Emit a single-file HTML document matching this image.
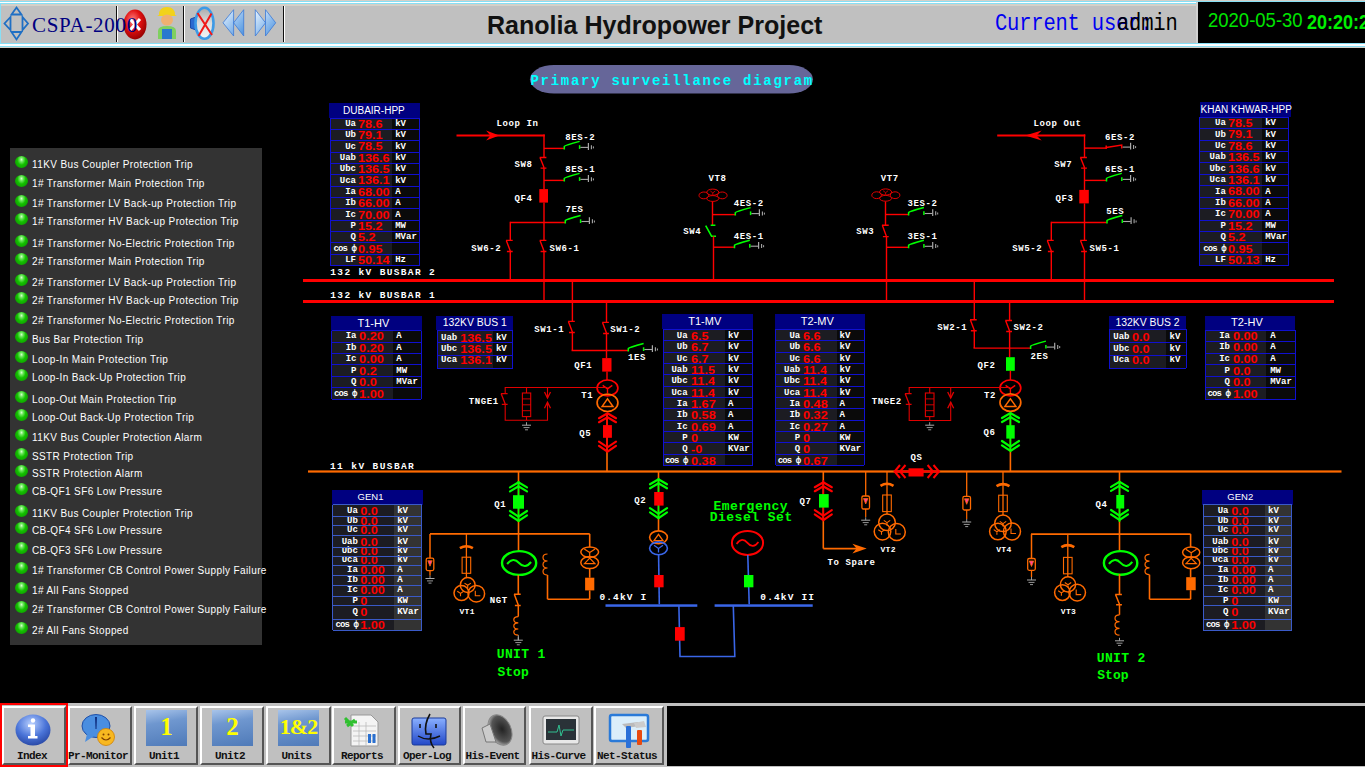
<!DOCTYPE html>
<html><head><meta charset="utf-8">
<style>
*{box-sizing:border-box}
html,body{margin:0;padding:0}
body{width:1365px;height:767px;overflow:hidden;position:relative;background:#000;font-family:"Liberation Sans",sans-serif}
.abs{position:absolute}
#top{position:absolute;left:0;top:0;width:1365px;height:48px;background:#d4d0c8}
#topin{position:absolute;left:0;top:1px;width:1365px;height:46px;background:#c0c0c0;
  border-top:1px solid #87dff5;border-bottom:1px solid #87dff5;border-left:1px solid #87dff5}
.sep{position:absolute;top:4px;width:2px;height:38px;background:#101010;border-right:1px solid #fff}
#panel{position:absolute;left:10px;top:148px;width:252px;height:497px;background:#333}
.al{position:absolute;left:22px;color:#fff;font-size:10px;letter-spacing:0.38px;white-space:nowrap;line-height:12px}
.led{position:absolute;left:5px;width:13px;height:12px;border-radius:50%;
  background:radial-gradient(ellipse at 50% 30%,#d8ffd0 0,#6fe860 18%,#14c000 45%,#0a8a00 100%)}
#tb{position:absolute;left:0;top:703px;width:1365px;height:64px;background:#c0c0c0}
#tbblack{position:absolute;left:667px;top:706px;width:698px;height:60px;background:#000}
.btn{position:absolute;top:706px;height:59px;background:#c0c0c0;border-top:2px solid #fff;border-left:2px solid #fff;border-right:2px solid #555;border-bottom:2px solid #555}
.bl{position:absolute;left:-7px;right:-3px;bottom:0px;text-align:center;font-family:"Liberation Mono",monospace;font-weight:bold;font-size:11px;letter-spacing:-0.6px;color:#111;line-height:13px}
.lbl{font-family:"Liberation Mono",monospace;font-weight:bold}
.tbl{position:absolute;border-collapse:collapse}
.th{position:absolute;background:#000080;color:#fff;font-size:11px;text-align:center;white-space:nowrap;line-height:14px}
.row{position:absolute;border:1px solid #1010d0;overflow:hidden}
.c1{position:absolute;left:0;top:0;bottom:0;background:#1c1c22}
.c2{position:absolute;top:0;bottom:0;right:0;background:#0a0a0a}
.lab{position:absolute;font-family:"Liberation Mono",monospace;font-weight:bold;font-size:9px;color:#fff;white-space:nowrap;text-align:right}
.val{position:absolute;color:#f00;font-size:12.7px;font-weight:bold;white-space:nowrap;line-height:12px;transform:scaleY(0.86);transform-origin:0 2px}
.unit{position:absolute;font-family:"Liberation Mono",monospace;font-weight:bold;font-size:9px;color:#fff;white-space:nowrap}
</style></head><body>

<div id="top"><div id="topin"></div></div>
<div class="abs" style="left:0;top:2px;width:1365px;height:1px;background:#fff"></div>
<div class="abs" style="left:0;top:43px;width:1365px;height:1px;background:#87dff5"></div>
<div class="abs" style="left:0;top:44px;width:1365px;height:2px;background:#fff"></div>
<div class="abs" style="left:0;top:3px;width:1365px;height:1px;background:#87dff5"></div>
<div class="abs" style="left:0;top:46px;width:1365px;height:1px;background:#87dff5"></div>
<div class="sep" style="left:116px"></div>
<div class="sep" style="left:183px"></div>
<div class="sep" style="left:283px"></div>
<svg class="abs" style="left:0;top:0" width="32" height="44" viewBox="0 0 32 44">
<g fill="none" stroke="#1f6fc4" stroke-width="1.8" stroke-linejoin="miter">
<path d="M11.5 14.5 L16.5 7.5 L21.5 14.5 Z"/><path d="M11.5 32 L16.5 39.5 L21.5 32 Z"/>
<path d="M10.5 17 L4.5 23.5 L10.5 30 Z"/><path d="M22.5 17 L28 23.5 L22.5 30 Z"/>
</g></svg>
<div class="abs" style="left:1px;top:4px;width:1364px;height:2px;background:#d4d0c8"></div>
<svg class="abs" style="left:122px;top:8px" width="26" height="33" viewBox="0 0 26 33">
<defs><radialGradient id="rg" cx="40%" cy="35%" r="70%"><stop offset="0" stop-color="#ff8080"/><stop offset="0.5" stop-color="#e01010"/><stop offset="1" stop-color="#900000"/></radialGradient></defs>
<ellipse cx="13" cy="16.5" rx="11.5" ry="15" fill="url(#rg)"/>
<path d="M8 11 L18 22 M18 11 L8 22" stroke="#fff" stroke-width="3"/>
</svg>
<svg class="abs" style="left:156px;top:5px" width="22" height="36" viewBox="0 0 22 36">
<path d="M3 10 Q3 2 11 2 Q19 2 19 10 L21 11 L1 11 Z" fill="#f2d21a"/>
<ellipse cx="11" cy="15" rx="6" ry="5.5" fill="#f0b070"/>
<path d="M2 34 L2 26 Q2 21 11 21 Q20 21 20 26 L20 34 Z" fill="#7fd060"/>
<path d="M6 34 L6 24 L16 24 L16 34 Z" fill="#2a78d0"/>
</svg>
<div class="abs" style="left:32px;top:12.5px;font-family:'Liberation Serif',serif;font-size:21px;letter-spacing:0.7px;color:#000080;line-height:24px">CSPA-2000</div>
<svg class="abs" style="left:180px;top:0" width="120" height="48" viewBox="180 0 120 48">
<defs><linearGradient id="spg" x1="0" y1="0" x2="0" y2="1"><stop offset="0" stop-color="#aaa"/><stop offset="0.5" stop-color="#ddd"/><stop offset="1" stop-color="#f4f4f4"/></linearGradient>
<linearGradient id="bg1" x1="0" y1="0" x2="1" y2="1"><stop offset="0" stop-color="#e8f4ff"/><stop offset="1" stop-color="#4a92e0"/></linearGradient></defs>
<path d="M190.5 19 L196 17 L196 30 L190.5 28 Z" fill="#2a6ad0" stroke="#1a4aa8" stroke-width="1"/>
<ellipse cx="204.5" cy="23.3" rx="9" ry="15.5" fill="url(#spg)" stroke="#3d9ae6" stroke-width="2.6"/>
<path d="M197.5 13 L212 35 M211.5 13.5 L198.5 36" stroke="#f01818" stroke-width="2"/>
<path d="M233.6 9.7 L223 22.8 L233.6 36 Z M243.7 9.7 L233.6 22.8 L243.7 36 Z" fill="url(#bg1)" stroke="#3a7ad8" stroke-width="0.8"/>
<path d="M255.3 9.7 L265.5 22.8 L255.3 36 Z M265.5 9.7 L275.7 22.8 L265.5 36 Z" fill="url(#bg1)" stroke="#3a7ad8" stroke-width="0.8"/>
</svg>
<div class="abs" style="left:487px;top:10.3px;font-size:25.05px;font-weight:bold;color:#111;line-height:30px;white-space:nowrap">Ranolia Hydropower Project</div>
<div class="abs" style="left:995px;top:11.5px;font-family:'Liberation Mono',monospace;font-size:20.5px;letter-spacing:-0.2px;color:#0000f0;line-height:26px;white-space:nowrap;transform:scaleY(1.2);transform-origin:0 19px">Current user:</div>
<div class="abs" style="left:1117px;top:11.5px;font-family:'Liberation Mono',monospace;font-size:20.5px;letter-spacing:-0.2px;color:#000;line-height:26px;white-space:nowrap;transform:scaleY(1.2);transform-origin:0 19px">admin</div>
<div class="abs" style="left:1196px;top:2px;width:169px;height:41px;background:#000;border-left:2px solid #d0d0d0"></div>
<div class="abs" style="left:1208px;top:8px;font-size:18.5px;color:#00e400;line-height:22px;white-space:nowrap;transform:scaleY(1.14);transform-origin:0 4px">2020-05-30</div>
<div class="abs" style="left:1307px;top:10.5px;font-size:18px;font-weight:bold;color:#00f000;line-height:22px;white-space:nowrap;transform:scaleY(1.08);transform-origin:0 4px">20:20:27</div>
<div id="panel">
<div class="led" style="top:8px"></div><div class="al" style="top:10.5px">11KV Bus Coupler Protection Trip</div>
<div class="led" style="top:27px"></div><div class="al" style="top:29.5px">1# Transformer Main Protection Trip</div>
<div class="led" style="top:47px"></div><div class="al" style="top:49.5px">1# Transformer LV Back-up Protection Trip</div>
<div class="led" style="top:65px"></div><div class="al" style="top:67.5px">1# Transformer HV Back-up Protection Trip</div>
<div class="led" style="top:87px"></div><div class="al" style="top:89.5px">1# Transformer No-Electric Protection Trip</div>
<div class="led" style="top:105px"></div><div class="al" style="top:107.5px">2# Transformer Main Protection Trip</div>
<div class="led" style="top:126px"></div><div class="al" style="top:128.5px">2# Transformer LV Back-up Protection Trip</div>
<div class="led" style="top:144px"></div><div class="al" style="top:146.5px">2# Transformer HV Back-up Protection Trip</div>
<div class="led" style="top:164px"></div><div class="al" style="top:166.5px">2# Transformer No-Electric Protection Trip</div>
<div class="led" style="top:183px"></div><div class="al" style="top:185.5px">Bus Bar Protection Trip</div>
<div class="led" style="top:203px"></div><div class="al" style="top:205.5px">Loop-In Main Protection Trip</div>
<div class="led" style="top:221px"></div><div class="al" style="top:223.5px">Loop-In Back-Up Protection Trip</div>
<div class="led" style="top:243px"></div><div class="al" style="top:245.5px">Loop-Out Main Protection Trip</div>
<div class="led" style="top:261px"></div><div class="al" style="top:263.5px">Loop-Out Back-Up Protection Trip</div>
<div class="led" style="top:281px"></div><div class="al" style="top:283.5px">11KV Bus Coupler Protection Alarm</div>
<div class="led" style="top:300px"></div><div class="al" style="top:302.5px">SSTR Protection Trip</div>
<div class="led" style="top:317px"></div><div class="al" style="top:319.5px">SSTR Protection Alarm</div>
<div class="led" style="top:335px"></div><div class="al" style="top:337.5px">CB-QF1 SF6 Low Pressure</div>
<div class="led" style="top:357px"></div><div class="al" style="top:359.5px">11KV Bus Coupler Protection Trip</div>
<div class="led" style="top:374px"></div><div class="al" style="top:376.5px">CB-QF4 SF6 Low Pressure</div>
<div class="led" style="top:394px"></div><div class="al" style="top:396.5px">CB-QF3 SF6 Low Pressure</div>
<div class="led" style="top:414px"></div><div class="al" style="top:416.5px">1# Transformer CB Control Power Supply Failure</div>
<div class="led" style="top:434px"></div><div class="al" style="top:436.5px">1# All Fans Stopped</div>
<div class="led" style="top:453px"></div><div class="al" style="top:455.5px">2# Transformer CB Control Power Supply Failure</div>
<div class="led" style="top:474px"></div><div class="al" style="top:476.5px">2# All Fans Stopped</div>
</div><div class="th" style="left:329px;top:103px;width:91px;height:15px;font-size:10px;line-height:15px"><span style="position:relative;left:-0.6px">DUBAIR-HPP</span></div>
<div class="abs" style="left:330.5px;top:118.0px;width:61.5px;height:147.5px;background:#1c1c22"></div>
<div class="abs" style="left:392px;top:118.0px;width:27.5px;height:147.5px;background:#0a0a0a"></div>
<div class="lab" style="left:296px;top:118.80000000000001px;line-height:11px;width:60px">Ua</div>
<div class="val" style="left:357.9px;top:118.7px">78.6</div>
<div class="unit" style="left:395.2px;top:118.80000000000001px;line-height:11px">kV</div>
<div class="lab" style="left:296px;top:130.10000000000002px;line-height:11px;width:60px">Ub</div>
<div class="val" style="left:357.9px;top:130.00000000000003px">79.1</div>
<div class="unit" style="left:395.2px;top:130.10000000000002px;line-height:11px">kV</div>
<div class="lab" style="left:296px;top:141.5px;line-height:11px;width:60px">Uc</div>
<div class="val" style="left:357.9px;top:141.4px">78.5</div>
<div class="unit" style="left:395.2px;top:141.5px;line-height:11px">kV</div>
<div class="lab" style="left:296px;top:152.8px;line-height:11px;width:60px">Uab</div>
<div class="val" style="left:357.9px;top:152.70000000000002px">136.6</div>
<div class="unit" style="left:395.2px;top:152.8px;line-height:11px">kV</div>
<div class="lab" style="left:296px;top:164.20000000000002px;line-height:11px;width:60px">Ubc</div>
<div class="val" style="left:357.9px;top:164.10000000000002px">136.5</div>
<div class="unit" style="left:395.2px;top:164.20000000000002px;line-height:11px">kV</div>
<div class="lab" style="left:296px;top:175.5px;line-height:11px;width:60px">Uca</div>
<div class="val" style="left:357.9px;top:175.4px">136.1</div>
<div class="unit" style="left:395.2px;top:175.5px;line-height:11px">kV</div>
<div class="lab" style="left:296px;top:186.9px;line-height:11px;width:60px">Ia</div>
<div class="val" style="left:357.9px;top:186.8px">68.00</div>
<div class="unit" style="left:395.2px;top:186.9px;line-height:11px">A</div>
<div class="lab" style="left:296px;top:198.20000000000002px;line-height:11px;width:60px">Ib</div>
<div class="val" style="left:357.9px;top:198.10000000000002px">66.00</div>
<div class="unit" style="left:395.2px;top:198.20000000000002px;line-height:11px">A</div>
<div class="lab" style="left:296px;top:209.60000000000002px;line-height:11px;width:60px">Ic</div>
<div class="val" style="left:357.9px;top:209.50000000000003px">70.00</div>
<div class="unit" style="left:395.2px;top:209.60000000000002px;line-height:11px">A</div>
<div class="lab" style="left:296px;top:220.9px;line-height:11px;width:60px">P</div>
<div class="val" style="left:357.9px;top:220.8px">15.2</div>
<div class="unit" style="left:395.2px;top:220.9px;line-height:11px">MW</div>
<div class="lab" style="left:296px;top:232.3px;line-height:11px;width:60px">Q</div>
<div class="val" style="left:357.9px;top:232.20000000000002px">5.2</div>
<div class="unit" style="left:395.2px;top:232.3px;line-height:11px">MVar</div>
<div class="lab" style="left:296px;top:243.60000000000002px;line-height:11px;width:60px"><span style="letter-spacing:-0.9px">cos &#1092;</span></div>
<div class="val" style="left:357.9px;top:243.50000000000003px">0.95</div>
<div class="lab" style="left:296px;top:254.99999999999997px;line-height:11px;width:60px">LF</div>
<div class="val" style="left:357.9px;top:254.89999999999998px">50.14</div>
<div class="unit" style="left:395.2px;top:254.99999999999997px;line-height:11px">Hz</div>
<div class="abs" style="left:330.5px;top:117.5px;width:89.0px;height:1px;background:#1010d0"></div>
<div class="abs" style="left:330.5px;top:128.8px;width:89.0px;height:1px;background:#1010d0"></div>
<div class="abs" style="left:330.5px;top:140.2px;width:89.0px;height:1px;background:#1010d0"></div>
<div class="abs" style="left:330.5px;top:151.5px;width:89.0px;height:1px;background:#1010d0"></div>
<div class="abs" style="left:330.5px;top:162.9px;width:89.0px;height:1px;background:#1010d0"></div>
<div class="abs" style="left:330.5px;top:174.2px;width:89.0px;height:1px;background:#1010d0"></div>
<div class="abs" style="left:330.5px;top:185.6px;width:89.0px;height:1px;background:#1010d0"></div>
<div class="abs" style="left:330.5px;top:196.9px;width:89.0px;height:1px;background:#1010d0"></div>
<div class="abs" style="left:330.5px;top:208.3px;width:89.0px;height:1px;background:#1010d0"></div>
<div class="abs" style="left:330.5px;top:219.6px;width:89.0px;height:1px;background:#1010d0"></div>
<div class="abs" style="left:330.5px;top:231.0px;width:89.0px;height:1px;background:#1010d0"></div>
<div class="abs" style="left:330.5px;top:242.3px;width:89.0px;height:1px;background:#1010d0"></div>
<div class="abs" style="left:330.5px;top:253.7px;width:89.0px;height:1px;background:#1010d0"></div>
<div class="abs" style="left:330.5px;top:265.0px;width:89.0px;height:1px;background:#1010d0"></div>
<div class="abs" style="left:330.0px;top:118.0px;width:1px;height:147.5px;background:#1010d0"></div>
<div class="abs" style="left:419.0px;top:118.0px;width:1px;height:147.5px;background:#1010d0"></div>
<div class="th" style="left:1200px;top:102px;width:91px;height:15px;font-size:10px;line-height:15px"><span style="position:relative;left:0.5px">KHAN KHWAR-HPP</span></div>
<div class="abs" style="left:1199.6px;top:117.3px;width:62.0px;height:148.3px;background:#1c1c22"></div>
<div class="abs" style="left:1261.6px;top:117.3px;width:27.0px;height:148.3px;background:#0a0a0a"></div>
<div class="lab" style="left:1165.8px;top:118.10000000000001px;line-height:11px;width:60px">Ua</div>
<div class="val" style="left:1227.9px;top:118.0px">78.5</div>
<div class="unit" style="left:1265.2px;top:118.10000000000001px;line-height:11px">kV</div>
<div class="lab" style="left:1165.8px;top:129.5px;line-height:11px;width:60px">Ub</div>
<div class="val" style="left:1227.9px;top:129.4px">79.1</div>
<div class="unit" style="left:1265.2px;top:129.5px;line-height:11px">kV</div>
<div class="lab" style="left:1165.8px;top:140.9px;line-height:11px;width:60px">Uc</div>
<div class="val" style="left:1227.9px;top:140.8px">78.6</div>
<div class="unit" style="left:1265.2px;top:140.9px;line-height:11px">kV</div>
<div class="lab" style="left:1165.8px;top:152.3px;line-height:11px;width:60px">Uab</div>
<div class="val" style="left:1227.9px;top:152.20000000000002px">136.5</div>
<div class="unit" style="left:1265.2px;top:152.3px;line-height:11px">kV</div>
<div class="lab" style="left:1165.8px;top:163.70000000000002px;line-height:11px;width:60px">Ubc</div>
<div class="val" style="left:1227.9px;top:163.60000000000002px">136.6</div>
<div class="unit" style="left:1265.2px;top:163.70000000000002px;line-height:11px">kV</div>
<div class="lab" style="left:1165.8px;top:175.10000000000002px;line-height:11px;width:60px">Uca</div>
<div class="val" style="left:1227.9px;top:175.00000000000003px">136.1</div>
<div class="unit" style="left:1265.2px;top:175.10000000000002px;line-height:11px">kV</div>
<div class="lab" style="left:1165.8px;top:186.5px;line-height:11px;width:60px">Ia</div>
<div class="val" style="left:1227.9px;top:186.4px">68.00</div>
<div class="unit" style="left:1265.2px;top:186.5px;line-height:11px">A</div>
<div class="lab" style="left:1165.8px;top:198.0px;line-height:11px;width:60px">Ib</div>
<div class="val" style="left:1227.9px;top:197.9px">66.00</div>
<div class="unit" style="left:1265.2px;top:198.0px;line-height:11px">A</div>
<div class="lab" style="left:1165.8px;top:209.4px;line-height:11px;width:60px">Ic</div>
<div class="val" style="left:1227.9px;top:209.3px">70.00</div>
<div class="unit" style="left:1265.2px;top:209.4px;line-height:11px">A</div>
<div class="lab" style="left:1165.8px;top:220.8px;line-height:11px;width:60px">P</div>
<div class="val" style="left:1227.9px;top:220.70000000000002px">15.2</div>
<div class="unit" style="left:1265.2px;top:220.8px;line-height:11px">MW</div>
<div class="lab" style="left:1165.8px;top:232.20000000000002px;line-height:11px;width:60px">Q</div>
<div class="val" style="left:1227.9px;top:232.10000000000002px">5.2</div>
<div class="unit" style="left:1265.2px;top:232.20000000000002px;line-height:11px">MVar</div>
<div class="lab" style="left:1165.8px;top:243.60000000000002px;line-height:11px;width:60px"><span style="letter-spacing:-0.9px">cos &#1092;</span></div>
<div class="val" style="left:1227.9px;top:243.50000000000003px">0.95</div>
<div class="lab" style="left:1165.8px;top:254.99999999999997px;line-height:11px;width:60px">LF</div>
<div class="val" style="left:1227.9px;top:254.89999999999998px">50.13</div>
<div class="unit" style="left:1265.2px;top:254.99999999999997px;line-height:11px">Hz</div>
<div class="abs" style="left:1199.6px;top:116.8px;width:89.0px;height:1px;background:#1010d0"></div>
<div class="abs" style="left:1199.6px;top:128.2px;width:89.0px;height:1px;background:#1010d0"></div>
<div class="abs" style="left:1199.6px;top:139.6px;width:89.0px;height:1px;background:#1010d0"></div>
<div class="abs" style="left:1199.6px;top:151.0px;width:89.0px;height:1px;background:#1010d0"></div>
<div class="abs" style="left:1199.6px;top:162.4px;width:89.0px;height:1px;background:#1010d0"></div>
<div class="abs" style="left:1199.6px;top:173.8px;width:89.0px;height:1px;background:#1010d0"></div>
<div class="abs" style="left:1199.6px;top:185.2px;width:89.0px;height:1px;background:#1010d0"></div>
<div class="abs" style="left:1199.6px;top:196.7px;width:89.0px;height:1px;background:#1010d0"></div>
<div class="abs" style="left:1199.6px;top:208.1px;width:89.0px;height:1px;background:#1010d0"></div>
<div class="abs" style="left:1199.6px;top:219.5px;width:89.0px;height:1px;background:#1010d0"></div>
<div class="abs" style="left:1199.6px;top:230.9px;width:89.0px;height:1px;background:#1010d0"></div>
<div class="abs" style="left:1199.6px;top:242.3px;width:89.0px;height:1px;background:#1010d0"></div>
<div class="abs" style="left:1199.6px;top:253.7px;width:89.0px;height:1px;background:#1010d0"></div>
<div class="abs" style="left:1199.6px;top:265.1px;width:89.0px;height:1px;background:#1010d0"></div>
<div class="abs" style="left:1199.1px;top:117.3px;width:1px;height:148.3px;background:#1010d0"></div>
<div class="abs" style="left:1288.1px;top:117.3px;width:1px;height:148.3px;background:#1010d0"></div>
<div class="th" style="left:331px;top:315.5px;width:90.69999999999999px;height:15.0px;font-size:11px;line-height:15.0px"><span style="position:relative;left:-3px">T1-HV</span></div>
<div class="abs" style="left:331.6px;top:330.5px;width:61.099999999999966px;height:68.89999999999998px;background:#1c1c22"></div>
<div class="abs" style="left:392.7px;top:330.5px;width:28.30000000000001px;height:68.89999999999998px;background:#0a0a0a"></div>
<div class="lab" style="left:296.5px;top:331.29999999999995px;line-height:11px;width:60px">Ia</div>
<div class="val" style="left:359.09999999999997px;top:331.2px">0.20</div>
<div class="unit" style="left:396.3px;top:331.29999999999995px;line-height:11px">A</div>
<div class="lab" style="left:296.5px;top:342.79999999999995px;line-height:11px;width:60px">Ib</div>
<div class="val" style="left:359.09999999999997px;top:342.7px">0.20</div>
<div class="unit" style="left:396.3px;top:342.79999999999995px;line-height:11px">A</div>
<div class="lab" style="left:296.5px;top:354.29999999999995px;line-height:11px;width:60px">Ic</div>
<div class="val" style="left:359.09999999999997px;top:354.2px">0.00</div>
<div class="unit" style="left:396.3px;top:354.29999999999995px;line-height:11px">A</div>
<div class="lab" style="left:296.5px;top:365.69999999999993px;line-height:11px;width:60px">P</div>
<div class="val" style="left:359.09999999999997px;top:365.59999999999997px">0.2</div>
<div class="unit" style="left:396.3px;top:365.69999999999993px;line-height:11px">MW</div>
<div class="lab" style="left:296.5px;top:377.19999999999993px;line-height:11px;width:60px">Q</div>
<div class="val" style="left:359.09999999999997px;top:377.09999999999997px">0.0</div>
<div class="unit" style="left:396.3px;top:377.19999999999993px;line-height:11px">MVar</div>
<div class="lab" style="left:296.5px;top:388.69999999999993px;line-height:11px;width:60px"><span style="letter-spacing:-0.9px">cos &#1092;</span></div>
<div class="val" style="left:359.09999999999997px;top:388.59999999999997px">1.00</div>
<div class="abs" style="left:331.6px;top:330.0px;width:89.39999999999998px;height:1px;background:#1010d0"></div>
<div class="abs" style="left:331.6px;top:341.5px;width:89.39999999999998px;height:1px;background:#1010d0"></div>
<div class="abs" style="left:331.6px;top:353.0px;width:89.39999999999998px;height:1px;background:#1010d0"></div>
<div class="abs" style="left:331.6px;top:364.4px;width:89.39999999999998px;height:1px;background:#1010d0"></div>
<div class="abs" style="left:331.6px;top:375.9px;width:89.39999999999998px;height:1px;background:#1010d0"></div>
<div class="abs" style="left:331.6px;top:387.4px;width:89.39999999999998px;height:1px;background:#1010d0"></div>
<div class="abs" style="left:331.6px;top:398.9px;width:89.39999999999998px;height:1px;background:#1010d0"></div>
<div class="abs" style="left:331.1px;top:330.5px;width:1px;height:68.89999999999998px;background:#1010d0"></div>
<div class="abs" style="left:420.5px;top:330.5px;width:1px;height:68.89999999999998px;background:#1010d0"></div>
<div class="th" style="left:436.4px;top:315.6px;width:76.89999999999998px;height:14.399999999999977px;font-size:10.4px;line-height:14.399999999999977px"><span style="position:relative;left:0px">132KV BUS 1</span></div>
<div class="abs" style="left:437px;top:330.0px;width:55.80000000000001px;height:38.60000000000002px;background:#1c1c22"></div>
<div class="abs" style="left:492.8px;top:330.0px;width:19.69999999999999px;height:38.60000000000002px;background:#0a0a0a"></div>
<div class="lab" style="left:441.0px;top:332.59999999999997px;line-height:11px;text-align:left">Uab</div>
<div class="val" style="left:460.2px;top:332.5px">136.5</div>
<div class="unit" style="left:495.9px;top:332.59999999999997px;line-height:11px">kV</div>
<div class="lab" style="left:441.0px;top:344.0px;line-height:11px;text-align:left">Ubc</div>
<div class="val" style="left:460.2px;top:343.90000000000003px">136.5</div>
<div class="unit" style="left:495.9px;top:344.0px;line-height:11px">kV</div>
<div class="lab" style="left:441.0px;top:354.79999999999995px;line-height:11px;text-align:left">Uca</div>
<div class="val" style="left:460.2px;top:354.7px">136.1</div>
<div class="unit" style="left:495.9px;top:354.79999999999995px;line-height:11px">kV</div>
<div class="abs" style="left:437px;top:329.5px;width:75.5px;height:1px;background:#1010d0"></div>
<div class="abs" style="left:437px;top:342.4px;width:75.5px;height:1px;background:#1010d0"></div>
<div class="abs" style="left:437px;top:355.2px;width:75.5px;height:1px;background:#1010d0"></div>
<div class="abs" style="left:437px;top:368.1px;width:75.5px;height:1px;background:#1010d0"></div>
<div class="abs" style="left:436.5px;top:330.0px;width:1px;height:38.60000000000002px;background:#1010d0"></div>
<div class="abs" style="left:512.0px;top:330.0px;width:1px;height:38.60000000000002px;background:#1010d0"></div>
<div class="th" style="left:662.2px;top:314px;width:91.09999999999991px;height:15.300000000000011px;font-size:11px;line-height:15.300000000000011px"><span style="position:relative;left:-3px">T1-MV</span></div>
<div class="abs" style="left:663.4px;top:329.3px;width:61.200000000000045px;height:136.2px;background:#1c1c22"></div>
<div class="abs" style="left:724.6px;top:329.3px;width:28.0px;height:136.2px;background:#0a0a0a"></div>
<div class="lab" style="left:627.6px;top:330.9px;line-height:11px;width:60px">Ua</div>
<div class="val" style="left:691.0px;top:330.8px">6.5</div>
<div class="unit" style="left:728.1px;top:330.9px;line-height:11px">kV</div>
<div class="lab" style="left:627.6px;top:342.29999999999995px;line-height:11px;width:60px">Ub</div>
<div class="val" style="left:691.0px;top:342.2px">6.7</div>
<div class="unit" style="left:728.1px;top:342.29999999999995px;line-height:11px">kV</div>
<div class="lab" style="left:627.6px;top:353.59999999999997px;line-height:11px;width:60px">Uc</div>
<div class="val" style="left:691.0px;top:353.5px">6.7</div>
<div class="unit" style="left:728.1px;top:353.59999999999997px;line-height:11px">kV</div>
<div class="lab" style="left:627.6px;top:364.99999999999994px;line-height:11px;width:60px">Uab</div>
<div class="val" style="left:691.0px;top:364.9px">11.5</div>
<div class="unit" style="left:728.1px;top:364.99999999999994px;line-height:11px">kV</div>
<div class="lab" style="left:627.6px;top:376.29999999999995px;line-height:11px;width:60px">Ubc</div>
<div class="val" style="left:691.0px;top:376.2px">11.4</div>
<div class="unit" style="left:728.1px;top:376.29999999999995px;line-height:11px">kV</div>
<div class="lab" style="left:627.6px;top:387.7px;line-height:11px;width:60px">Uca</div>
<div class="val" style="left:691.0px;top:387.6px">11.4</div>
<div class="unit" style="left:728.1px;top:387.7px;line-height:11px">kV</div>
<div class="lab" style="left:627.6px;top:398.99999999999994px;line-height:11px;width:60px">Ia</div>
<div class="val" style="left:691.0px;top:398.9px">1.67</div>
<div class="unit" style="left:728.1px;top:398.99999999999994px;line-height:11px">A</div>
<div class="lab" style="left:627.6px;top:410.4px;line-height:11px;width:60px">Ib</div>
<div class="val" style="left:691.0px;top:410.3px">0.58</div>
<div class="unit" style="left:728.1px;top:410.4px;line-height:11px">A</div>
<div class="lab" style="left:627.6px;top:421.7px;line-height:11px;width:60px">Ic</div>
<div class="val" style="left:691.0px;top:421.6px">0.69</div>
<div class="unit" style="left:728.1px;top:421.7px;line-height:11px">A</div>
<div class="lab" style="left:627.6px;top:432.99999999999994px;line-height:11px;width:60px">P</div>
<div class="val" style="left:691.0px;top:432.9px">0</div>
<div class="unit" style="left:728.1px;top:432.99999999999994px;line-height:11px">KW</div>
<div class="lab" style="left:627.6px;top:444.4px;line-height:11px;width:60px">Q</div>
<div class="val" style="left:691.0px;top:444.3px">-0</div>
<div class="unit" style="left:728.1px;top:444.4px;line-height:11px">KVar</div>
<div class="lab" style="left:627.6px;top:455.7px;line-height:11px;width:60px"><span style="letter-spacing:-0.9px">cos &#1092;</span></div>
<div class="val" style="left:691.0px;top:455.6px">0.38</div>
<div class="abs" style="left:663.4px;top:328.8px;width:89.20000000000005px;height:1px;background:#1010d0"></div>
<div class="abs" style="left:663.4px;top:340.2px;width:89.20000000000005px;height:1px;background:#1010d0"></div>
<div class="abs" style="left:663.4px;top:351.5px;width:89.20000000000005px;height:1px;background:#1010d0"></div>
<div class="abs" style="left:663.4px;top:362.9px;width:89.20000000000005px;height:1px;background:#1010d0"></div>
<div class="abs" style="left:663.4px;top:374.2px;width:89.20000000000005px;height:1px;background:#1010d0"></div>
<div class="abs" style="left:663.4px;top:385.6px;width:89.20000000000005px;height:1px;background:#1010d0"></div>
<div class="abs" style="left:663.4px;top:396.9px;width:89.20000000000005px;height:1px;background:#1010d0"></div>
<div class="abs" style="left:663.4px;top:408.3px;width:89.20000000000005px;height:1px;background:#1010d0"></div>
<div class="abs" style="left:663.4px;top:419.6px;width:89.20000000000005px;height:1px;background:#1010d0"></div>
<div class="abs" style="left:663.4px;top:430.9px;width:89.20000000000005px;height:1px;background:#1010d0"></div>
<div class="abs" style="left:663.4px;top:442.3px;width:89.20000000000005px;height:1px;background:#1010d0"></div>
<div class="abs" style="left:663.4px;top:453.6px;width:89.20000000000005px;height:1px;background:#1010d0"></div>
<div class="abs" style="left:663.4px;top:465.0px;width:89.20000000000005px;height:1px;background:#1010d0"></div>
<div class="abs" style="left:662.9px;top:329.3px;width:1px;height:136.2px;background:#1010d0"></div>
<div class="abs" style="left:752.1px;top:329.3px;width:1px;height:136.2px;background:#1010d0"></div>
<div class="th" style="left:775.1px;top:314px;width:90.39999999999998px;height:15.300000000000011px;font-size:11px;line-height:15.300000000000011px"><span style="position:relative;left:-3px">T2-MV</span></div>
<div class="abs" style="left:775.6px;top:329.3px;width:61.0px;height:136.2px;background:#1c1c22"></div>
<div class="abs" style="left:836.6px;top:329.3px;width:27.699999999999932px;height:136.2px;background:#0a0a0a"></div>
<div class="lab" style="left:740.2px;top:330.9px;line-height:11px;width:60px">Ua</div>
<div class="val" style="left:803.0px;top:330.8px">6.6</div>
<div class="unit" style="left:839.6px;top:330.9px;line-height:11px">kV</div>
<div class="lab" style="left:740.2px;top:342.29999999999995px;line-height:11px;width:60px">Ub</div>
<div class="val" style="left:803.0px;top:342.2px">6.6</div>
<div class="unit" style="left:839.6px;top:342.29999999999995px;line-height:11px">kV</div>
<div class="lab" style="left:740.2px;top:353.59999999999997px;line-height:11px;width:60px">Uc</div>
<div class="val" style="left:803.0px;top:353.5px">6.6</div>
<div class="unit" style="left:839.6px;top:353.59999999999997px;line-height:11px">kV</div>
<div class="lab" style="left:740.2px;top:364.99999999999994px;line-height:11px;width:60px">Uab</div>
<div class="val" style="left:803.0px;top:364.9px">11.4</div>
<div class="unit" style="left:839.6px;top:364.99999999999994px;line-height:11px">kV</div>
<div class="lab" style="left:740.2px;top:376.29999999999995px;line-height:11px;width:60px">Ubc</div>
<div class="val" style="left:803.0px;top:376.2px">11.4</div>
<div class="unit" style="left:839.6px;top:376.29999999999995px;line-height:11px">kV</div>
<div class="lab" style="left:740.2px;top:387.7px;line-height:11px;width:60px">Uca</div>
<div class="val" style="left:803.0px;top:387.6px">11.4</div>
<div class="unit" style="left:839.6px;top:387.7px;line-height:11px">kV</div>
<div class="lab" style="left:740.2px;top:398.99999999999994px;line-height:11px;width:60px">Ia</div>
<div class="val" style="left:803.0px;top:398.9px">0.48</div>
<div class="unit" style="left:839.6px;top:398.99999999999994px;line-height:11px">A</div>
<div class="lab" style="left:740.2px;top:410.4px;line-height:11px;width:60px">Ib</div>
<div class="val" style="left:803.0px;top:410.3px">0.32</div>
<div class="unit" style="left:839.6px;top:410.4px;line-height:11px">A</div>
<div class="lab" style="left:740.2px;top:421.7px;line-height:11px;width:60px">Ic</div>
<div class="val" style="left:803.0px;top:421.6px">0.27</div>
<div class="unit" style="left:839.6px;top:421.7px;line-height:11px">A</div>
<div class="lab" style="left:740.2px;top:432.99999999999994px;line-height:11px;width:60px">P</div>
<div class="val" style="left:803.0px;top:432.9px">0</div>
<div class="unit" style="left:839.6px;top:432.99999999999994px;line-height:11px">KW</div>
<div class="lab" style="left:740.2px;top:444.4px;line-height:11px;width:60px">Q</div>
<div class="val" style="left:803.0px;top:444.3px">0</div>
<div class="unit" style="left:839.6px;top:444.4px;line-height:11px">KVar</div>
<div class="lab" style="left:740.2px;top:455.7px;line-height:11px;width:60px"><span style="letter-spacing:-0.9px">cos &#1092;</span></div>
<div class="val" style="left:803.0px;top:455.6px">0.67</div>
<div class="abs" style="left:775.6px;top:328.8px;width:88.69999999999993px;height:1px;background:#1010d0"></div>
<div class="abs" style="left:775.6px;top:340.2px;width:88.69999999999993px;height:1px;background:#1010d0"></div>
<div class="abs" style="left:775.6px;top:351.5px;width:88.69999999999993px;height:1px;background:#1010d0"></div>
<div class="abs" style="left:775.6px;top:362.9px;width:88.69999999999993px;height:1px;background:#1010d0"></div>
<div class="abs" style="left:775.6px;top:374.2px;width:88.69999999999993px;height:1px;background:#1010d0"></div>
<div class="abs" style="left:775.6px;top:385.6px;width:88.69999999999993px;height:1px;background:#1010d0"></div>
<div class="abs" style="left:775.6px;top:396.9px;width:88.69999999999993px;height:1px;background:#1010d0"></div>
<div class="abs" style="left:775.6px;top:408.3px;width:88.69999999999993px;height:1px;background:#1010d0"></div>
<div class="abs" style="left:775.6px;top:419.6px;width:88.69999999999993px;height:1px;background:#1010d0"></div>
<div class="abs" style="left:775.6px;top:430.9px;width:88.69999999999993px;height:1px;background:#1010d0"></div>
<div class="abs" style="left:775.6px;top:442.3px;width:88.69999999999993px;height:1px;background:#1010d0"></div>
<div class="abs" style="left:775.6px;top:453.6px;width:88.69999999999993px;height:1px;background:#1010d0"></div>
<div class="abs" style="left:775.6px;top:465.0px;width:88.69999999999993px;height:1px;background:#1010d0"></div>
<div class="abs" style="left:775.1px;top:329.3px;width:1px;height:136.2px;background:#1010d0"></div>
<div class="abs" style="left:863.8px;top:329.3px;width:1px;height:136.2px;background:#1010d0"></div>
<div class="th" style="left:1108.6px;top:316.2px;width:77.70000000000005px;height:13.0px;font-size:10.4px;line-height:13.0px"><span style="position:relative;left:0px">132KV BUS 2</span></div>
<div class="abs" style="left:1109px;top:329.2px;width:56.59999999999991px;height:39.19999999999999px;background:#1c1c22"></div>
<div class="abs" style="left:1165.6px;top:329.2px;width:20.40000000000009px;height:39.19999999999999px;background:#0a0a0a"></div>
<div class="lab" style="left:1113.3px;top:332.2px;line-height:11px;text-align:left">Uab</div>
<div class="val" style="left:1131.9px;top:332.1px">0.0</div>
<div class="unit" style="left:1169.5px;top:332.2px;line-height:11px">kV</div>
<div class="lab" style="left:1113.3px;top:343.59999999999997px;line-height:11px;text-align:left">Ubc</div>
<div class="val" style="left:1131.9px;top:343.5px">0.0</div>
<div class="unit" style="left:1169.5px;top:343.59999999999997px;line-height:11px">kV</div>
<div class="lab" style="left:1113.3px;top:354.59999999999997px;line-height:11px;text-align:left">Uca</div>
<div class="val" style="left:1131.9px;top:354.5px">0.0</div>
<div class="unit" style="left:1169.5px;top:354.59999999999997px;line-height:11px">kV</div>
<div class="abs" style="left:1109px;top:328.7px;width:77px;height:1px;background:#1010d0"></div>
<div class="abs" style="left:1109px;top:341.8px;width:77px;height:1px;background:#1010d0"></div>
<div class="abs" style="left:1109px;top:354.8px;width:77px;height:1px;background:#1010d0"></div>
<div class="abs" style="left:1109px;top:367.9px;width:77px;height:1px;background:#1010d0"></div>
<div class="abs" style="left:1108.5px;top:329.2px;width:1px;height:39.19999999999999px;background:#1010d0"></div>
<div class="abs" style="left:1185.5px;top:329.2px;width:1px;height:39.19999999999999px;background:#1010d0"></div>
<div class="th" style="left:1204.8px;top:316.2px;width:90.20000000000005px;height:13.800000000000011px;font-size:11px;line-height:13.800000000000011px"><span style="position:relative;left:-3px">T2-HV</span></div>
<div class="abs" style="left:1205px;top:330.0px;width:61.200000000000045px;height:69.5px;background:#1c1c22"></div>
<div class="abs" style="left:1266.2px;top:330.0px;width:28.799999999999955px;height:69.5px;background:#0a0a0a"></div>
<div class="lab" style="left:1170px;top:330.79999999999995px;line-height:11px;width:60px">Ia</div>
<div class="val" style="left:1232.9px;top:330.7px">0.00</div>
<div class="unit" style="left:1270.2px;top:330.79999999999995px;line-height:11px">A</div>
<div class="lab" style="left:1170px;top:342.4px;line-height:11px;width:60px">Ib</div>
<div class="val" style="left:1232.9px;top:342.3px">0.00</div>
<div class="unit" style="left:1270.2px;top:342.4px;line-height:11px">A</div>
<div class="lab" style="left:1170px;top:353.99999999999994px;line-height:11px;width:60px">Ic</div>
<div class="val" style="left:1232.9px;top:353.9px">0.00</div>
<div class="unit" style="left:1270.2px;top:353.99999999999994px;line-height:11px">A</div>
<div class="lab" style="left:1170px;top:365.59999999999997px;line-height:11px;width:60px">P</div>
<div class="val" style="left:1232.9px;top:365.5px">0.0</div>
<div class="unit" style="left:1270.2px;top:365.59999999999997px;line-height:11px">MW</div>
<div class="lab" style="left:1170px;top:377.09999999999997px;line-height:11px;width:60px">Q</div>
<div class="val" style="left:1232.9px;top:377.0px">0.0</div>
<div class="unit" style="left:1270.2px;top:377.09999999999997px;line-height:11px">MVar</div>
<div class="lab" style="left:1170px;top:388.69999999999993px;line-height:11px;width:60px"><span style="letter-spacing:-0.9px">cos &#1092;</span></div>
<div class="val" style="left:1232.9px;top:388.59999999999997px">1.00</div>
<div class="abs" style="left:1205px;top:329.5px;width:90px;height:1px;background:#1010d0"></div>
<div class="abs" style="left:1205px;top:341.1px;width:90px;height:1px;background:#1010d0"></div>
<div class="abs" style="left:1205px;top:352.7px;width:90px;height:1px;background:#1010d0"></div>
<div class="abs" style="left:1205px;top:364.3px;width:90px;height:1px;background:#1010d0"></div>
<div class="abs" style="left:1205px;top:375.8px;width:90px;height:1px;background:#1010d0"></div>
<div class="abs" style="left:1205px;top:387.4px;width:90px;height:1px;background:#1010d0"></div>
<div class="abs" style="left:1205px;top:399.0px;width:90px;height:1px;background:#1010d0"></div>
<div class="abs" style="left:1204.5px;top:330.0px;width:1px;height:69.5px;background:#1010d0"></div>
<div class="abs" style="left:1294.5px;top:330.0px;width:1px;height:69.5px;background:#1010d0"></div>
<div class="th" style="left:332.2px;top:490.3px;width:90.60000000000002px;height:14.300000000000011px;font-size:9.5px;line-height:14.300000000000011px"><span style="position:relative;left:-7px">GEN1</span></div>
<div class="abs" style="left:332.8px;top:504.6px;width:61.0px;height:125.5px;background:#1c1c22"></div>
<div class="abs" style="left:393.8px;top:504.6px;width:28.0px;height:125.5px;background:#333333"></div>
<div class="lab" style="left:297.9px;top:505.9px;line-height:11px;width:60px">Ua</div>
<div class="val" style="left:360.2px;top:505.8px">0.0</div>
<div class="unit" style="left:397.2px;top:505.9px;line-height:11px">kV</div>
<div class="lab" style="left:297.9px;top:515.6999999999999px;line-height:11px;width:60px">Ub</div>
<div class="val" style="left:360.2px;top:515.5999999999999px">0.0</div>
<div class="unit" style="left:397.2px;top:515.6999999999999px;line-height:11px">kV</div>
<div class="lab" style="left:297.9px;top:524.9px;line-height:11px;width:60px">Uc</div>
<div class="val" style="left:360.2px;top:524.8px">0.0</div>
<div class="unit" style="left:397.2px;top:524.9px;line-height:11px">kV</div>
<div class="lab" style="left:297.9px;top:537.1999999999999px;line-height:11px;width:60px">Uab</div>
<div class="val" style="left:360.2px;top:537.0999999999999px">0.0</div>
<div class="unit" style="left:397.2px;top:537.1999999999999px;line-height:11px">kV</div>
<div class="lab" style="left:297.9px;top:546.4px;line-height:11px;width:60px">Ubc</div>
<div class="val" style="left:360.2px;top:546.3px">0.0</div>
<div class="unit" style="left:397.2px;top:546.4px;line-height:11px">kV</div>
<div class="lab" style="left:297.9px;top:555.1999999999999px;line-height:11px;width:60px">Uca</div>
<div class="val" style="left:360.2px;top:555.0999999999999px">0.0</div>
<div class="unit" style="left:397.2px;top:555.1999999999999px;line-height:11px">kV</div>
<div class="lab" style="left:297.9px;top:564.6px;line-height:11px;width:60px">Ia</div>
<div class="val" style="left:360.2px;top:564.5px">0.00</div>
<div class="unit" style="left:397.2px;top:564.6px;line-height:11px">A</div>
<div class="lab" style="left:297.9px;top:575.3px;line-height:11px;width:60px">Ib</div>
<div class="val" style="left:360.2px;top:575.1999999999999px">0.00</div>
<div class="unit" style="left:397.2px;top:575.3px;line-height:11px">A</div>
<div class="lab" style="left:297.9px;top:584.6999999999999px;line-height:11px;width:60px">Ic</div>
<div class="val" style="left:360.2px;top:584.5999999999999px">0.00</div>
<div class="unit" style="left:397.2px;top:584.6999999999999px;line-height:11px">A</div>
<div class="lab" style="left:297.9px;top:595.8px;line-height:11px;width:60px">P</div>
<div class="val" style="left:360.2px;top:595.6999999999999px">0</div>
<div class="unit" style="left:397.2px;top:595.8px;line-height:11px">KW</div>
<div class="lab" style="left:297.9px;top:607.4px;line-height:11px;width:60px">Q</div>
<div class="val" style="left:360.2px;top:607.3px">0</div>
<div class="unit" style="left:397.2px;top:607.4px;line-height:11px">KVar</div>
<div class="lab" style="left:297.9px;top:619.9px;line-height:11px;width:60px"><span style="letter-spacing:-0.9px">cos &#1092;</span></div>
<div class="val" style="left:360.2px;top:619.8px">1.00</div>
<div class="abs" style="left:332.8px;top:504.1px;width:89.0px;height:1px;background:#3a5ac8"></div>
<div class="abs" style="left:332.8px;top:515.8px;width:89.0px;height:1px;background:#3a5ac8"></div>
<div class="abs" style="left:332.8px;top:525.0px;width:89.0px;height:1px;background:#3a5ac8"></div>
<div class="abs" style="left:332.8px;top:534.8px;width:89.0px;height:1px;background:#3a5ac8"></div>
<div class="abs" style="left:332.8px;top:547.1px;width:89.0px;height:1px;background:#3a5ac8"></div>
<div class="abs" style="left:332.8px;top:555.9px;width:89.0px;height:1px;background:#3a5ac8"></div>
<div class="abs" style="left:332.8px;top:564.7px;width:89.0px;height:1px;background:#3a5ac8"></div>
<div class="abs" style="left:332.8px;top:575.0px;width:89.0px;height:1px;background:#3a5ac8"></div>
<div class="abs" style="left:332.8px;top:585.2px;width:89.0px;height:1px;background:#3a5ac8"></div>
<div class="abs" style="left:332.8px;top:596.0px;width:89.0px;height:1px;background:#3a5ac8"></div>
<div class="abs" style="left:332.8px;top:605.3px;width:89.0px;height:1px;background:#3a5ac8"></div>
<div class="abs" style="left:332.8px;top:618.5px;width:89.0px;height:1px;background:#3a5ac8"></div>
<div class="abs" style="left:332.8px;top:629.6px;width:89.0px;height:1px;background:#3a5ac8"></div>
<div class="abs" style="left:332.3px;top:504.6px;width:1px;height:125.5px;background:#3a5ac8"></div>
<div class="abs" style="left:421.3px;top:504.6px;width:1px;height:125.5px;background:#3a5ac8"></div>
<div class="th" style="left:1201.8px;top:490.3px;width:91.0px;height:14.300000000000011px;font-size:9.5px;line-height:14.300000000000011px"><span style="position:relative;left:-7px">GEN2</span></div>
<div class="abs" style="left:1203.2px;top:504.6px;width:61.59999999999991px;height:125.5px;background:#1c1c22"></div>
<div class="abs" style="left:1264.8px;top:504.6px;width:27.0px;height:125.5px;background:#333333"></div>
<div class="lab" style="left:1168.5px;top:505.9px;line-height:11px;width:60px">Ua</div>
<div class="val" style="left:1231.2px;top:505.8px">0.0</div>
<div class="unit" style="left:1268.0px;top:505.9px;line-height:11px">kV</div>
<div class="lab" style="left:1168.5px;top:515.6999999999999px;line-height:11px;width:60px">Ub</div>
<div class="val" style="left:1231.2px;top:515.5999999999999px">0.0</div>
<div class="unit" style="left:1268.0px;top:515.6999999999999px;line-height:11px">kV</div>
<div class="lab" style="left:1168.5px;top:524.9px;line-height:11px;width:60px">Uc</div>
<div class="val" style="left:1231.2px;top:524.8px">0.0</div>
<div class="unit" style="left:1268.0px;top:524.9px;line-height:11px">kV</div>
<div class="lab" style="left:1168.5px;top:537.1999999999999px;line-height:11px;width:60px">Uab</div>
<div class="val" style="left:1231.2px;top:537.0999999999999px">0.0</div>
<div class="unit" style="left:1268.0px;top:537.1999999999999px;line-height:11px">kV</div>
<div class="lab" style="left:1168.5px;top:546.4px;line-height:11px;width:60px">Ubc</div>
<div class="val" style="left:1231.2px;top:546.3px">0.0</div>
<div class="unit" style="left:1268.0px;top:546.4px;line-height:11px">kV</div>
<div class="lab" style="left:1168.5px;top:555.1999999999999px;line-height:11px;width:60px">Uca</div>
<div class="val" style="left:1231.2px;top:555.0999999999999px">0.0</div>
<div class="unit" style="left:1268.0px;top:555.1999999999999px;line-height:11px">kV</div>
<div class="lab" style="left:1168.5px;top:564.6px;line-height:11px;width:60px">Ia</div>
<div class="val" style="left:1231.2px;top:564.5px">0.00</div>
<div class="unit" style="left:1268.0px;top:564.6px;line-height:11px">A</div>
<div class="lab" style="left:1168.5px;top:575.3px;line-height:11px;width:60px">Ib</div>
<div class="val" style="left:1231.2px;top:575.1999999999999px">0.00</div>
<div class="unit" style="left:1268.0px;top:575.3px;line-height:11px">A</div>
<div class="lab" style="left:1168.5px;top:584.6999999999999px;line-height:11px;width:60px">Ic</div>
<div class="val" style="left:1231.2px;top:584.5999999999999px">0.00</div>
<div class="unit" style="left:1268.0px;top:584.6999999999999px;line-height:11px">A</div>
<div class="lab" style="left:1168.5px;top:595.8px;line-height:11px;width:60px">P</div>
<div class="val" style="left:1231.2px;top:595.6999999999999px">0</div>
<div class="unit" style="left:1268.0px;top:595.8px;line-height:11px">KW</div>
<div class="lab" style="left:1168.5px;top:607.4px;line-height:11px;width:60px">Q</div>
<div class="val" style="left:1231.2px;top:607.3px">0</div>
<div class="unit" style="left:1268.0px;top:607.4px;line-height:11px">KVar</div>
<div class="lab" style="left:1168.5px;top:619.9px;line-height:11px;width:60px"><span style="letter-spacing:-0.9px">cos &#1092;</span></div>
<div class="val" style="left:1231.2px;top:619.8px">1.00</div>
<div class="abs" style="left:1203.2px;top:504.1px;width:88.59999999999991px;height:1px;background:#3a5ac8"></div>
<div class="abs" style="left:1203.2px;top:515.8px;width:88.59999999999991px;height:1px;background:#3a5ac8"></div>
<div class="abs" style="left:1203.2px;top:525.0px;width:88.59999999999991px;height:1px;background:#3a5ac8"></div>
<div class="abs" style="left:1203.2px;top:534.8px;width:88.59999999999991px;height:1px;background:#3a5ac8"></div>
<div class="abs" style="left:1203.2px;top:547.1px;width:88.59999999999991px;height:1px;background:#3a5ac8"></div>
<div class="abs" style="left:1203.2px;top:555.9px;width:88.59999999999991px;height:1px;background:#3a5ac8"></div>
<div class="abs" style="left:1203.2px;top:564.7px;width:88.59999999999991px;height:1px;background:#3a5ac8"></div>
<div class="abs" style="left:1203.2px;top:575.0px;width:88.59999999999991px;height:1px;background:#3a5ac8"></div>
<div class="abs" style="left:1203.2px;top:585.2px;width:88.59999999999991px;height:1px;background:#3a5ac8"></div>
<div class="abs" style="left:1203.2px;top:596.0px;width:88.59999999999991px;height:1px;background:#3a5ac8"></div>
<div class="abs" style="left:1203.2px;top:605.3px;width:88.59999999999991px;height:1px;background:#3a5ac8"></div>
<div class="abs" style="left:1203.2px;top:618.5px;width:88.59999999999991px;height:1px;background:#3a5ac8"></div>
<div class="abs" style="left:1203.2px;top:629.6px;width:88.59999999999991px;height:1px;background:#3a5ac8"></div>
<div class="abs" style="left:1202.7px;top:504.6px;width:1px;height:125.5px;background:#3a5ac8"></div>
<div class="abs" style="left:1291.3px;top:504.6px;width:1px;height:125.5px;background:#3a5ac8"></div><svg class="abs" style="left:0;top:0" width="1365" height="767" viewBox="0 0 1365 767">
<style>.lbl{font-family:"Liberation Mono",monospace;font-weight:bold}.gl{font-family:"Liberation Mono",monospace;font-weight:bold}</style>
<path d="M554 65 L789 65 A24 14.3 0 0 1 789 93.6 L554 93.6 A24 14.3 0 0 1 554 65 Z" fill="#666699"/>
<text x="530.5" y="85.3" class="lbl" style="font-size:14px;letter-spacing:1.72px" fill="#00ffff">Primary surveillance diagram</text>
<rect x="303" y="279" width="1031" height="3" fill="#ff0000"/>
<rect x="303" y="300" width="1031" height="3" fill="#ff0000"/>
<rect x="308" y="470.4" width="1033.5" height="2.2000000000000455" fill="#ff6a00"/>
<text x="330.3" y="275.2" class="lbl" style="font-size:9.5px;letter-spacing:1.35px" fill="#ffffff">132 kV BUSBAR 2</text>
<text x="330.3" y="298.1" class="lbl" style="font-size:9.5px;letter-spacing:1.35px" fill="#ffffff">132 kV BUSBAR 1</text>
<text x="330.0" y="469.2" class="lbl" style="font-size:9.5px;letter-spacing:1.4px" fill="#ffffff">11 kV BUSBAR</text>
<line x1="456.5" y1="135.4" x2="544.8" y2="135.4" stroke="#ff0000" stroke-width="2"/>
<path d="M499.3 135.4 L486.1 130.4 L490.3 135.4 L486.1 140.4 Z" fill="#ff0000"/>
<line x1="544" y1="134.4" x2="544" y2="157.5" stroke="#ff0000" stroke-width="1.4"/>
<path d="M539.7 157.5 L546.4 157.5 M540 157.5 L544 167.6 M540.6 168.1 L546.4 168.1" stroke="#ff0000" stroke-width="1.4" fill="none" />
<line x1="544" y1="168.1" x2="544" y2="189.2" stroke="#ff0000" stroke-width="1.4"/>
<line x1="544" y1="148.4" x2="564" y2="148.4" stroke="#ff0000" stroke-width="1.4"/>
<path d="M564.3 149.4 L564.3 146.4 Q565 145.4 579.6 141.4" stroke="#00ff00" stroke-width="1.5" fill="none" />
<path d="M579.6 145.20000000000002 L579.6 148.9" stroke="#00ff00" stroke-width="1.5" fill="none" />
<line x1="580.4" y1="147.4" x2="588" y2="147.4" stroke="#a8a8a8" stroke-width="1.1"/>
<line x1="588.4" y1="143.1" x2="588.4" y2="149.9" stroke="#a8a8a8" stroke-width="1.2"/>
<line x1="591.4" y1="145.20000000000002" x2="591.4" y2="149.20000000000002" stroke="#a8a8a8" stroke-width="1.1"/>
<line x1="593.4" y1="146.4" x2="593.4" y2="148.4" stroke="#a8a8a8" stroke-width="1"/>
<line x1="544" y1="180.4" x2="564" y2="180.4" stroke="#ff0000" stroke-width="1.4"/>
<path d="M564.3 181.4 L564.3 178.4 Q565 177.4 579.6 173.4" stroke="#00ff00" stroke-width="1.5" fill="none" />
<path d="M579.6 177.20000000000002 L579.6 180.9" stroke="#00ff00" stroke-width="1.5" fill="none" />
<line x1="580.4" y1="179.4" x2="588" y2="179.4" stroke="#a8a8a8" stroke-width="1.1"/>
<line x1="588.4" y1="175.1" x2="588.4" y2="181.9" stroke="#a8a8a8" stroke-width="1.2"/>
<line x1="591.4" y1="177.20000000000002" x2="591.4" y2="181.20000000000002" stroke="#a8a8a8" stroke-width="1.1"/>
<line x1="593.4" y1="178.4" x2="593.4" y2="180.4" stroke="#a8a8a8" stroke-width="1"/>
<rect x="539.3" y="189.1" width="8.700000000000045" height="13.5" fill="#ff0000"/>
<line x1="544" y1="202.6" x2="544" y2="240.4" stroke="#ff0000" stroke-width="1.4"/>
<path d="M539.7 240.4 L546.4 240.4 M540 240.4 L544 251.0 M540.6 251.5 L546.4 251.5" stroke="#ff0000" stroke-width="1.4" fill="none" />
<line x1="544" y1="251.5" x2="544" y2="301" stroke="#ff0000" stroke-width="1.4"/>
<line x1="510.3" y1="222.5" x2="565" y2="222.5" stroke="#ff0000" stroke-width="1.4"/>
<path d="M565.3 223.5 L565.3 220.5 Q566 219.5 580.6 215.5" stroke="#00ff00" stroke-width="1.5" fill="none" />
<path d="M580.6 219.3 L580.6 223.0" stroke="#00ff00" stroke-width="1.5" fill="none" />
<line x1="581.4" y1="221.5" x2="589" y2="221.5" stroke="#a8a8a8" stroke-width="1.1"/>
<line x1="589.4" y1="217.2" x2="589.4" y2="224.0" stroke="#a8a8a8" stroke-width="1.2"/>
<line x1="592.4" y1="219.3" x2="592.4" y2="223.3" stroke="#a8a8a8" stroke-width="1.1"/>
<line x1="594.4" y1="220.5" x2="594.4" y2="222.5" stroke="#a8a8a8" stroke-width="1"/>
<line x1="510.3" y1="221.7" x2="510.3" y2="240.4" stroke="#ff0000" stroke-width="1.4"/>
<path d="M506.0 240.4 L512.7 240.4 M506.3 240.4 L510.3 251.0 M506.90000000000003 251.5 L512.7 251.5" stroke="#ff0000" stroke-width="1.4" fill="none" />
<line x1="510.3" y1="251.5" x2="510.3" y2="280" stroke="#ff0000" stroke-width="1.4"/>
<text x="496.5" y="126.4" class="lbl" style="font-size:9px;letter-spacing:0.6px" fill="#ffffff">Loop In</text>
<text x="565.2" y="140" class="lbl" style="font-size:9px;letter-spacing:0.6px" fill="#ffffff">8ES-2</text>
<text x="514.4" y="167.2" class="lbl" style="font-size:9px;letter-spacing:0.6px" fill="#ffffff">SW8</text>
<text x="565.2" y="171.9" class="lbl" style="font-size:9px;letter-spacing:0.6px" fill="#ffffff">8ES-1</text>
<text x="514.5" y="200.5" class="lbl" style="font-size:9px;letter-spacing:0.6px" fill="#ffffff">QF4</text>
<text x="565.5" y="212" class="lbl" style="font-size:9px;letter-spacing:0.6px" fill="#ffffff">7ES</text>
<text x="471.2" y="251" class="lbl" style="font-size:9px;letter-spacing:0.6px" fill="#ffffff">SW6-2</text>
<text x="549.5" y="251" class="lbl" style="font-size:9px;letter-spacing:0.6px" fill="#ffffff">SW6-1</text>
<ellipse cx="703.8" cy="195.4" rx="4.8" ry="3.4" fill="none" stroke="#e00000" stroke-width="1"/>
<ellipse cx="722.3" cy="195.4" rx="4.8" ry="3.4" fill="none" stroke="#e00000" stroke-width="1"/>
<ellipse cx="712.8" cy="192.20000000000002" rx="6" ry="3.1" fill="none" stroke="#e00000" stroke-width="1"/>
<ellipse cx="712.8" cy="198.5" rx="6" ry="2.9" fill="none" stroke="#e00000" stroke-width="1"/>
<path d="M710.3 190.9 L712.8 192.9 L715.3 190.9 M712.8 192.9 L712.8 194.9" stroke="#e00000" stroke-width="0.8" fill="none" />
<line x1="712.5" y1="201.5" x2="712.5" y2="225.2" stroke="#ff0000" stroke-width="1.4"/>
<path d="M710.7 225.2 L715.4 225.2 M705.7 225.7 L711.5 236.2 M711 236.2 L716 236.2" stroke="#00ff00" stroke-width="1.6" fill="none" />
<line x1="713.5" y1="236.2" x2="713.5" y2="280" stroke="#ff0000" stroke-width="1.4"/>
<line x1="712.5" y1="214.6" x2="735" y2="214.6" stroke="#ff0000" stroke-width="1.4"/>
<path d="M735.3 215.6 L735.3 212.6 Q736 211.6 750.6 207.6" stroke="#00ff00" stroke-width="1.5" fill="none" />
<path d="M750.6 211.4 L750.6 215.1" stroke="#00ff00" stroke-width="1.5" fill="none" />
<line x1="751.4" y1="213.6" x2="759" y2="213.6" stroke="#a8a8a8" stroke-width="1.1"/>
<line x1="759.4" y1="209.29999999999998" x2="759.4" y2="216.1" stroke="#a8a8a8" stroke-width="1.2"/>
<line x1="762.4" y1="211.4" x2="762.4" y2="215.4" stroke="#a8a8a8" stroke-width="1.1"/>
<line x1="764.4" y1="212.6" x2="764.4" y2="214.6" stroke="#a8a8a8" stroke-width="1"/>
<line x1="713.5" y1="247.2" x2="734.2" y2="247.2" stroke="#ff0000" stroke-width="1.4"/>
<path d="M734.5 248.2 L734.5 245.2 Q735.2 244.2 749.8000000000001 240.2" stroke="#00ff00" stroke-width="1.5" fill="none" />
<path d="M749.8000000000001 244.0 L749.8000000000001 247.7" stroke="#00ff00" stroke-width="1.5" fill="none" />
<line x1="750.6" y1="246.2" x2="758.2" y2="246.2" stroke="#a8a8a8" stroke-width="1.1"/>
<line x1="758.6" y1="241.89999999999998" x2="758.6" y2="248.7" stroke="#a8a8a8" stroke-width="1.2"/>
<line x1="761.6" y1="244.0" x2="761.6" y2="248.0" stroke="#a8a8a8" stroke-width="1.1"/>
<line x1="763.6" y1="245.2" x2="763.6" y2="247.2" stroke="#a8a8a8" stroke-width="1"/>
<text x="708.5" y="181.1" class="lbl" style="font-size:9px;letter-spacing:0.6px" fill="#ffffff">VT8</text>
<text x="733.7" y="206" class="lbl" style="font-size:9px;letter-spacing:0.6px" fill="#ffffff">4ES-2</text>
<text x="683.3" y="233.9" class="lbl" style="font-size:9px;letter-spacing:0.6px" fill="#ffffff">SW4</text>
<text x="733.7" y="238.9" class="lbl" style="font-size:9px;letter-spacing:0.6px" fill="#ffffff">4ES-1</text>
<ellipse cx="876.6" cy="195.2" rx="4.8" ry="3.4" fill="none" stroke="#e00000" stroke-width="1"/>
<ellipse cx="895.1" cy="195.2" rx="4.8" ry="3.4" fill="none" stroke="#e00000" stroke-width="1"/>
<ellipse cx="885.6" cy="192.0" rx="6" ry="3.1" fill="none" stroke="#e00000" stroke-width="1"/>
<ellipse cx="885.6" cy="198.29999999999998" rx="6" ry="2.9" fill="none" stroke="#e00000" stroke-width="1"/>
<path d="M883.1 190.7 L885.6 192.7 L888.1 190.7 M885.6 192.7 L885.6 194.7" stroke="#e00000" stroke-width="0.8" fill="none" />
<line x1="885.5" y1="201.5" x2="885.5" y2="225.3" stroke="#ff0000" stroke-width="1.4"/>
<path d="M882.0 225.3 L888.6999999999999 225.3 M882.3 225.3 L886.3 236.1 M882.9 236.6 L888.6999999999999 236.6" stroke="#ff0000" stroke-width="1.4" fill="none" />
<line x1="886.5" y1="236.6" x2="886.5" y2="301" stroke="#ff0000" stroke-width="1.4"/>
<line x1="885.4" y1="214.5" x2="908.3" y2="214.5" stroke="#ff0000" stroke-width="1.4"/>
<path d="M908.5999999999999 215.5 L908.5999999999999 212.5 Q909.3 211.5 923.9 207.5" stroke="#00ff00" stroke-width="1.5" fill="none" />
<path d="M923.9 211.3 L923.9 215.0" stroke="#00ff00" stroke-width="1.5" fill="none" />
<line x1="924.6999999999999" y1="213.5" x2="932.3" y2="213.5" stroke="#a8a8a8" stroke-width="1.1"/>
<line x1="932.6999999999999" y1="209.2" x2="932.6999999999999" y2="216.0" stroke="#a8a8a8" stroke-width="1.2"/>
<line x1="935.6999999999999" y1="211.3" x2="935.6999999999999" y2="215.3" stroke="#a8a8a8" stroke-width="1.1"/>
<line x1="937.6999999999999" y1="212.5" x2="937.6999999999999" y2="214.5" stroke="#a8a8a8" stroke-width="1"/>
<line x1="886.5" y1="247.3" x2="908.3" y2="247.3" stroke="#ff0000" stroke-width="1.4"/>
<path d="M908.5999999999999 248.3 L908.5999999999999 245.3 Q909.3 244.3 923.9 240.3" stroke="#00ff00" stroke-width="1.5" fill="none" />
<path d="M923.9 244.10000000000002 L923.9 247.8" stroke="#00ff00" stroke-width="1.5" fill="none" />
<line x1="924.6999999999999" y1="246.3" x2="932.3" y2="246.3" stroke="#a8a8a8" stroke-width="1.1"/>
<line x1="932.6999999999999" y1="242.0" x2="932.6999999999999" y2="248.8" stroke="#a8a8a8" stroke-width="1.2"/>
<line x1="935.6999999999999" y1="244.10000000000002" x2="935.6999999999999" y2="248.10000000000002" stroke="#a8a8a8" stroke-width="1.1"/>
<line x1="937.6999999999999" y1="245.3" x2="937.6999999999999" y2="247.3" stroke="#a8a8a8" stroke-width="1"/>
<text x="880.8" y="181" class="lbl" style="font-size:9px;letter-spacing:0.6px" fill="#ffffff">VT7</text>
<text x="907.5" y="206" class="lbl" style="font-size:9px;letter-spacing:0.6px" fill="#ffffff">3ES-2</text>
<text x="856.2" y="234" class="lbl" style="font-size:9px;letter-spacing:0.6px" fill="#ffffff">SW3</text>
<text x="907.5" y="239" class="lbl" style="font-size:9px;letter-spacing:0.6px" fill="#ffffff">3ES-1</text>
<line x1="997.2" y1="135.4" x2="1085.3" y2="135.4" stroke="#ff0000" stroke-width="2"/>
<path d="M1025.3 135.4 L1041.7 130.4 L1036.5 135.4 L1041.7 140.4 Z" fill="#ff0000"/>
<line x1="1084.5" y1="134.4" x2="1084.5" y2="157.5" stroke="#ff0000" stroke-width="1.4"/>
<path d="M1080.2 157.5 L1086.9 157.5 M1080.5 157.5 L1084.5 167.6 M1081.1 168.1 L1086.9 168.1" stroke="#ff0000" stroke-width="1.4" fill="none" />
<line x1="1084.5" y1="168.1" x2="1084.5" y2="190" stroke="#ff0000" stroke-width="1.4"/>
<line x1="1084.5" y1="148.1" x2="1106.2" y2="148.1" stroke="#ff0000" stroke-width="1.4"/>
<path d="M1106.2 145.6 L1106.2 149.1 M1106.2 147.6 L1121.7 145.1 L1121.7 148.6" stroke="#ff0000" stroke-width="1.5" fill="none" />
<line x1="1122.6000000000001" y1="147.1" x2="1130.2" y2="147.1" stroke="#a8a8a8" stroke-width="1.1"/>
<line x1="1130.6000000000001" y1="142.79999999999998" x2="1130.6000000000001" y2="149.6" stroke="#a8a8a8" stroke-width="1.2"/>
<line x1="1133.6000000000001" y1="144.9" x2="1133.6000000000001" y2="148.9" stroke="#a8a8a8" stroke-width="1.1"/>
<line x1="1135.6000000000001" y1="146.1" x2="1135.6000000000001" y2="148.1" stroke="#a8a8a8" stroke-width="1"/>
<line x1="1084.5" y1="180.4" x2="1106.2" y2="180.4" stroke="#ff0000" stroke-width="1.4"/>
<path d="M1106.5 181.4 L1106.5 178.4 Q1107.2 177.4 1121.8 173.4" stroke="#00ff00" stroke-width="1.5" fill="none" />
<path d="M1121.8 177.20000000000002 L1121.8 180.9" stroke="#00ff00" stroke-width="1.5" fill="none" />
<line x1="1122.6000000000001" y1="179.4" x2="1130.2" y2="179.4" stroke="#a8a8a8" stroke-width="1.1"/>
<line x1="1130.6000000000001" y1="175.1" x2="1130.6000000000001" y2="181.9" stroke="#a8a8a8" stroke-width="1.2"/>
<line x1="1133.6000000000001" y1="177.20000000000002" x2="1133.6000000000001" y2="181.20000000000002" stroke="#a8a8a8" stroke-width="1.1"/>
<line x1="1135.6000000000001" y1="178.4" x2="1135.6000000000001" y2="180.4" stroke="#a8a8a8" stroke-width="1"/>
<rect x="1079.3" y="189.9" width="9.5" height="13.5" fill="#ff0000"/>
<line x1="1084.5" y1="203.4" x2="1084.5" y2="240.4" stroke="#ff0000" stroke-width="1.4"/>
<path d="M1080.2 240.4 L1086.9 240.4 M1080.5 240.4 L1084.5 251.0 M1081.1 251.5 L1086.9 251.5" stroke="#ff0000" stroke-width="1.4" fill="none" />
<line x1="1084.5" y1="251.5" x2="1084.5" y2="301" stroke="#ff0000" stroke-width="1.4"/>
<line x1="1051.3" y1="222.5" x2="1106.7" y2="222.5" stroke="#ff0000" stroke-width="1.4"/>
<path d="M1107.0 223.5 L1107.0 220.5 Q1107.7 219.5 1122.3 215.5" stroke="#00ff00" stroke-width="1.5" fill="none" />
<path d="M1122.3 219.3 L1122.3 223.0" stroke="#00ff00" stroke-width="1.5" fill="none" />
<line x1="1123.1000000000001" y1="221.5" x2="1130.7" y2="221.5" stroke="#a8a8a8" stroke-width="1.1"/>
<line x1="1131.1000000000001" y1="217.2" x2="1131.1000000000001" y2="224.0" stroke="#a8a8a8" stroke-width="1.2"/>
<line x1="1134.1000000000001" y1="219.3" x2="1134.1000000000001" y2="223.3" stroke="#a8a8a8" stroke-width="1.1"/>
<line x1="1136.1000000000001" y1="220.5" x2="1136.1000000000001" y2="222.5" stroke="#a8a8a8" stroke-width="1"/>
<line x1="1051.3" y1="221.7" x2="1051.3" y2="240.4" stroke="#ff0000" stroke-width="1.4"/>
<path d="M1047.0 240.4 L1053.7 240.4 M1047.3 240.4 L1051.3 251.0 M1047.8999999999999 251.5 L1053.7 251.5" stroke="#ff0000" stroke-width="1.4" fill="none" />
<line x1="1051.3" y1="251.5" x2="1051.3" y2="280" stroke="#ff0000" stroke-width="1.4"/>
<text x="1033.5" y="126.2" class="lbl" style="font-size:9px;letter-spacing:0.6px" fill="#ffffff">Loop Out</text>
<text x="1105.1" y="140" class="lbl" style="font-size:9px;letter-spacing:0.6px" fill="#ffffff">6ES-2</text>
<text x="1054.3" y="167.2" class="lbl" style="font-size:9px;letter-spacing:0.6px" fill="#ffffff">SW7</text>
<text x="1105.1" y="172" class="lbl" style="font-size:9px;letter-spacing:0.6px" fill="#ffffff">6ES-1</text>
<text x="1055.4" y="200.5" class="lbl" style="font-size:9px;letter-spacing:0.6px" fill="#ffffff">QF3</text>
<text x="1106.2" y="214" class="lbl" style="font-size:9px;letter-spacing:0.6px" fill="#ffffff">5ES</text>
<text x="1012.2" y="251" class="lbl" style="font-size:9px;letter-spacing:0.6px" fill="#ffffff">SW5-2</text>
<text x="1089.5" y="251" class="lbl" style="font-size:9px;letter-spacing:0.6px" fill="#ffffff">SW5-1</text>
<line x1="572.4" y1="282" x2="572.4" y2="321.4" stroke="#ff0000" stroke-width="1.4"/>
<path d="M568.1 321.4 L574.8 321.4 M568.4 321.4 L572.4 332.0 M569.0 332.5 L574.8 332.5" stroke="#ff0000" stroke-width="1.4" fill="none" />
<line x1="572.4" y1="332.5" x2="572.4" y2="350.5" stroke="#ff0000" stroke-width="1.4"/>
<line x1="606.5" y1="303" x2="606.5" y2="322.4" stroke="#ff0000" stroke-width="1.4"/>
<path d="M602.2 322.4 L608.9 322.4 M602.5 322.4 L606.5 333.0 M603.1 333.5 L608.9 333.5" stroke="#ff0000" stroke-width="1.4" fill="none" />
<line x1="606.5" y1="333.5" x2="606.5" y2="358.1" stroke="#ff0000" stroke-width="1.4"/>
<line x1="571.6" y1="350.5" x2="628" y2="350.5" stroke="#ff0000" stroke-width="1.4"/>
<path d="M628.3 351.5 L628.3 348.5 Q629 347.5 643.6 343.5" stroke="#00ff00" stroke-width="1.5" fill="none" />
<path d="M643.6 347.3 L643.6 351.0" stroke="#00ff00" stroke-width="1.5" fill="none" />
<line x1="644.4" y1="349.5" x2="652" y2="349.5" stroke="#a8a8a8" stroke-width="1.1"/>
<line x1="652.4" y1="345.2" x2="652.4" y2="352.0" stroke="#a8a8a8" stroke-width="1.2"/>
<line x1="655.4" y1="347.3" x2="655.4" y2="351.3" stroke="#a8a8a8" stroke-width="1.1"/>
<line x1="657.4" y1="348.5" x2="657.4" y2="350.5" stroke="#a8a8a8" stroke-width="1"/>
<rect x="602.2" y="358.1" width="9.299999999999955" height="13.5" fill="#ff0000"/>
<line x1="607" y1="371.6" x2="607" y2="380" stroke="#ff0000" stroke-width="1.4"/>
<ellipse cx="607.5" cy="387.9" rx="10.4" ry="7.9" fill="none" stroke="#ff0000" stroke-width="1.7"/>
<path d="M602.7 385.42 L607.5 388.78000000000003 L612.3 385.42 M607.5 388.78000000000003 L607.5 393.1" stroke="#ff0000" stroke-width="1.4" fill="none" />
<ellipse cx="607.5" cy="402.8" rx="10.4" ry="8.7" fill="none" stroke="#ff6a00" stroke-width="1.7"/>
<path d="M602.0 406.6 L607.5 398.90000000000003 L613.0 406.6 Z" stroke="#ff6a00" stroke-width="1.5" fill="none" />
<line x1="607" y1="413" x2="607" y2="471" stroke="#ff6a00" stroke-width="1.6"/>
<path d="M599.0 418.2 L607.5 413.2 L616.0 418.2" stroke="#ff0000" stroke-width="2.2" fill="none" stroke-linecap="round"/>
<path d="M599.0 422.2 L607.5 417.2 L616.0 422.2" stroke="#ff0000" stroke-width="2.2" fill="none" stroke-linecap="round"/>
<rect x="603" y="425.1" width="8.899999999999977" height="12.699999999999989" fill="#ff0000"/>
<path d="M599.0 441.6 L607.5 447.3 L616.0 441.6" stroke="#ff0000" stroke-width="2.2" fill="none" stroke-linecap="round"/>
<path d="M599.0 445.90000000000003 L607.5 451.6 L616.0 445.90000000000003" stroke="#ff0000" stroke-width="2.2" fill="none" stroke-linecap="round"/>
<line x1="607" y1="413" x2="607" y2="451" stroke="#ff0000" stroke-width="1.6"/>
<path d="M607.5 387.5 L505.2 387.5 L505.2 393.7 M505.2 404.4 L505.2 420.2 L547.5 420.2 L547.5 402.3 M547.5 398 L547.5 387.5" stroke="#e00000" stroke-width="1.1" fill="none" />
<path d="M500.9 393.7 L507.59999999999997 393.7 M501.2 393.7 L505.2 403.9 M501.8 404.4 L507.59999999999997 404.4" stroke="#e00000" stroke-width="1.3" fill="none" />
<rect x="522.4" y="393" width="8.3" height="23.6" fill="none" stroke="#e00000" stroke-width="1.1"/>
<line x1="522.4" y1="398.9" x2="530.7" y2="398.9" stroke="#e00000" stroke-width="0.9"/>
<line x1="522.4" y1="404.8" x2="530.7" y2="404.8" stroke="#e00000" stroke-width="0.9"/>
<line x1="522.4" y1="410.7" x2="530.7" y2="410.7" stroke="#e00000" stroke-width="0.9"/>
<line x1="526.5" y1="387.5" x2="526.5" y2="393" stroke="#e00000" stroke-width="1.1"/>
<line x1="526.5" y1="416.6" x2="526.5" y2="420.2" stroke="#e00000" stroke-width="1.1"/>
<line x1="526.5" y1="422.2" x2="526.5" y2="425.2" stroke="#a8a8a8" stroke-width="0.9"/>
<line x1="522.0" y1="425.2" x2="531.0" y2="425.2" stroke="#a8a8a8" stroke-width="1"/>
<line x1="523.5" y1="427.59999999999997" x2="529.5" y2="427.59999999999997" stroke="#a8a8a8" stroke-width="0.9"/>
<line x1="525.0" y1="429.8" x2="528.0" y2="429.8" stroke="#a8a8a8" stroke-width="0.9"/>
<path d="M544.5 392 L547.5 398 L550.5 392 M544.5 408.3 L547.5 402.3 L550.5 408.3" stroke="#e00000" stroke-width="1.3" fill="none" />
<text x="534.2" y="332" class="lbl" style="font-size:9px;letter-spacing:0.6px" fill="#ffffff">SW1-1</text>
<text x="610.2" y="332" class="lbl" style="font-size:9px;letter-spacing:0.6px" fill="#ffffff">SW1-2</text>
<text x="628.1" y="359.9" class="lbl" style="font-size:9px;letter-spacing:0.6px" fill="#ffffff">1ES</text>
<text x="574.3" y="368" class="lbl" style="font-size:9px;letter-spacing:0.6px" fill="#ffffff">QF1</text>
<text x="468.8" y="404" class="lbl" style="font-size:9px;letter-spacing:0.6px" fill="#ffffff">TNGE1</text>
<text x="581.2" y="398" class="lbl" style="font-size:9px;letter-spacing:0.6px" fill="#ffffff">T1</text>
<text x="579.3" y="436.3" class="lbl" style="font-size:9px;letter-spacing:0.6px" fill="#ffffff">Q5</text>
<line x1="974.3" y1="282" x2="974.3" y2="319.7" stroke="#ff0000" stroke-width="1.4"/>
<path d="M970.0 319.7 L976.6999999999999 319.7 M970.3 319.7 L974.3 330.3 M970.9 330.8 L976.6999999999999 330.8" stroke="#ff0000" stroke-width="1.4" fill="none" />
<line x1="974.3" y1="330.8" x2="974.3" y2="348.1" stroke="#ff0000" stroke-width="1.4"/>
<line x1="1009.6" y1="303" x2="1009.6" y2="320.5" stroke="#ff0000" stroke-width="1.4"/>
<path d="M1005.3000000000001 320.5 L1012.0 320.5 M1005.6 320.5 L1009.6 331.0 M1006.2 331.5 L1012.0 331.5" stroke="#ff0000" stroke-width="1.4" fill="none" />
<line x1="1009.6" y1="331.5" x2="1009.6" y2="357.2" stroke="#ff0000" stroke-width="1.4"/>
<line x1="973.5" y1="348.1" x2="1030.3" y2="348.1" stroke="#ff0000" stroke-width="1.4"/>
<path d="M1030.6 349.1 L1030.6 346.1 Q1031.3 345.1 1045.8999999999999 341.1" stroke="#00ff00" stroke-width="1.5" fill="none" />
<path d="M1045.8999999999999 344.90000000000003 L1045.8999999999999 348.6" stroke="#00ff00" stroke-width="1.5" fill="none" />
<line x1="1046.7" y1="347.1" x2="1054.3" y2="347.1" stroke="#a8a8a8" stroke-width="1.1"/>
<line x1="1054.7" y1="342.8" x2="1054.7" y2="349.6" stroke="#a8a8a8" stroke-width="1.2"/>
<line x1="1057.7" y1="344.90000000000003" x2="1057.7" y2="348.90000000000003" stroke="#a8a8a8" stroke-width="1.1"/>
<line x1="1059.7" y1="346.1" x2="1059.7" y2="348.1" stroke="#a8a8a8" stroke-width="1"/>
<rect x="1006" y="357.2" width="8.799999999999955" height="13.600000000000023" fill="#00ff00"/>
<line x1="1010.4" y1="370.8" x2="1010.4" y2="380" stroke="#ff0000" stroke-width="1.4"/>
<ellipse cx="1010.4" cy="387.9" rx="10.4" ry="7.9" fill="none" stroke="#ff0000" stroke-width="1.7"/>
<path d="M1005.6 385.42 L1010.4 388.78000000000003 L1015.1999999999999 385.42 M1010.4 388.78000000000003 L1010.4 393.1" stroke="#ff0000" stroke-width="1.4" fill="none" />
<ellipse cx="1010.4" cy="402.6" rx="10.4" ry="8.7" fill="none" stroke="#ff6a00" stroke-width="1.7"/>
<path d="M1004.9 406.40000000000003 L1010.4 398.70000000000005 L1015.9 406.40000000000003 Z" stroke="#ff6a00" stroke-width="1.5" fill="none" />
<line x1="1010.4" y1="412.6" x2="1010.4" y2="471" stroke="#ff6a00" stroke-width="1.6"/>
<line x1="1010.4" y1="412.6" x2="1010.4" y2="451" stroke="#00ff00" stroke-width="1.6"/>
<path d="M1002.0 418 L1010.5 413 L1019.0 418" stroke="#00ff00" stroke-width="2.2" fill="none" stroke-linecap="round"/>
<path d="M1002.0 422 L1010.5 417 L1019.0 422" stroke="#00ff00" stroke-width="2.2" fill="none" stroke-linecap="round"/>
<rect x="1006.3" y="425.2" width="8.400000000000091" height="13.400000000000034" fill="#00ff00"/>
<path d="M1002.0 441.0 L1010.5 446.7 L1019.0 441.0" stroke="#00ff00" stroke-width="2.2" fill="none" stroke-linecap="round"/>
<path d="M1002.0 445.3 L1010.5 451.0 L1019.0 445.3" stroke="#00ff00" stroke-width="2.2" fill="none" stroke-linecap="round"/>
<path d="M1010.4 387.5 L909.2 387.5 L909.2 393.7 M909.2 404.4 L909.2 420.5 L950.7 420.5 L950.7 402.3 M950.7 398 L950.7 387.5" stroke="#e00000" stroke-width="1.1" fill="none" />
<path d="M904.9000000000001 393.7 L911.6 393.7 M905.2 393.7 L909.2 403.9 M905.8000000000001 404.4 L911.6 404.4" stroke="#e00000" stroke-width="1.3" fill="none" />
<rect x="925.4" y="393" width="8.6" height="23.6" fill="none" stroke="#e00000" stroke-width="1.1"/>
<line x1="925.4" y1="398.9" x2="934" y2="398.9" stroke="#e00000" stroke-width="0.9"/>
<line x1="925.4" y1="404.8" x2="934" y2="404.8" stroke="#e00000" stroke-width="0.9"/>
<line x1="925.4" y1="410.7" x2="934" y2="410.7" stroke="#e00000" stroke-width="0.9"/>
<line x1="929.7" y1="387.5" x2="929.7" y2="393" stroke="#e00000" stroke-width="1.1"/>
<line x1="929.7" y1="416.6" x2="929.7" y2="420.5" stroke="#e00000" stroke-width="1.1"/>
<line x1="929.7" y1="422.2" x2="929.7" y2="425.2" stroke="#a8a8a8" stroke-width="0.9"/>
<line x1="925.2" y1="425.2" x2="934.2" y2="425.2" stroke="#a8a8a8" stroke-width="1"/>
<line x1="926.7" y1="427.59999999999997" x2="932.7" y2="427.59999999999997" stroke="#a8a8a8" stroke-width="0.9"/>
<line x1="928.2" y1="429.8" x2="931.2" y2="429.8" stroke="#a8a8a8" stroke-width="0.9"/>
<path d="M947.7 392 L950.7 398 L953.7 392 M947.7 408.3 L950.7 402.3 L953.7 408.3" stroke="#e00000" stroke-width="1.3" fill="none" />
<text x="937.3" y="330" class="lbl" style="font-size:9px;letter-spacing:0.6px" fill="#ffffff">SW2-1</text>
<text x="1013.4" y="330" class="lbl" style="font-size:9px;letter-spacing:0.6px" fill="#ffffff">SW2-2</text>
<text x="1030.5" y="358.7" class="lbl" style="font-size:9px;letter-spacing:0.6px" fill="#ffffff">2ES</text>
<text x="977.4" y="368" class="lbl" style="font-size:9px;letter-spacing:0.6px" fill="#ffffff">QF2</text>
<text x="871.7" y="404" class="lbl" style="font-size:9px;letter-spacing:0.6px" fill="#ffffff">TNGE2</text>
<text x="984.0" y="398" class="lbl" style="font-size:9px;letter-spacing:0.6px" fill="#ffffff">T2</text>
<text x="983.6" y="435.3" class="lbl" style="font-size:9px;letter-spacing:0.6px" fill="#ffffff">Q6</text>
<line x1="896" y1="471.5" x2="938" y2="471.5" stroke="#ff0000" stroke-width="1.8"/>
<rect x="908.5" y="468.3" width="15.100000000000023" height="8.199999999999989" fill="#ff0000"/>
<path d="M900 465 L894.6 471.5 L900 478 M905.5 465 L900 471.5 L905.5 478" stroke="#ff0000" stroke-width="2" fill="none" />
<path d="M927.6 465 L933 471.5 L927.6 478 M933.5 465 L939 471.5 L933.5 478" stroke="#ff0000" stroke-width="2" fill="none" />
<text x="910.4" y="460.4" class="lbl" style="font-size:9px;letter-spacing:0.6px" fill="#ffffff">QS</text>
<line x1="518.5" y1="472" x2="518.5" y2="551" stroke="#ff6a00" stroke-width="1.6"/>
<line x1="518.5" y1="481" x2="518.5" y2="522" stroke="#00ff00" stroke-width="1.6"/>
<path d="M510.0 487.4 L518.5 482.4 L527.0 487.4" stroke="#00ff00" stroke-width="2.2" fill="none" stroke-linecap="round"/>
<path d="M510.0 491.4 L518.5 486.4 L527.0 491.4" stroke="#00ff00" stroke-width="2.2" fill="none" stroke-linecap="round"/>
<rect x="513" y="495.2" width="11" height="13.5" fill="#00ff00"/>
<path d="M510.0 511.0 L518.5 516.7 L527.0 511.0" stroke="#00ff00" stroke-width="2.2" fill="none" stroke-linecap="round"/>
<path d="M510.0 515.3 L518.5 521.0 L527.0 515.3" stroke="#00ff00" stroke-width="2.2" fill="none" stroke-linecap="round"/>
<line x1="430" y1="533.9" x2="589.7" y2="533.9" stroke="#ff6a00" stroke-width="1.6"/>
<line x1="430" y1="533.9" x2="430" y2="558.2" stroke="#ff6a00" stroke-width="1.5"/>
<rect x="426.2" y="558.2" width="7.6" height="12.399999999999977" rx="1.5" fill="none" stroke="#ff6a00" stroke-width="1.3"/>
<path d="M427.8 560.7 L432.2 560.7 L430 566.2 Z" stroke="#ff6a00" stroke-width="0.8" fill="#ff3f9f" />
<line x1="430" y1="575.5" x2="430" y2="578.5" stroke="#a8a8a8" stroke-width="0.9"/>
<line x1="425.5" y1="578.5" x2="434.5" y2="578.5" stroke="#a8a8a8" stroke-width="1"/>
<line x1="427" y1="580.9" x2="433" y2="580.9" stroke="#a8a8a8" stroke-width="0.9"/>
<line x1="428.5" y1="583.1" x2="431.5" y2="583.1" stroke="#a8a8a8" stroke-width="0.9"/>
<line x1="430" y1="570.6" x2="430" y2="575.5" stroke="#ff6a00" stroke-width="1.3"/>
<line x1="466.4" y1="533.9" x2="466.4" y2="578" stroke="#ff6a00" stroke-width="1.3"/>
<path d="M459.9 548.2 Q466.4 544.2 472.9 548.2" stroke="#ff6a00" stroke-width="2.6" fill="none" />
<rect x="462.09999999999997" y="557.2" width="8.6" height="16.09999999999991" fill="none" stroke="#ff6a00" stroke-width="1.1"/>
<ellipse cx="467.7" cy="585" rx="7.4" ry="7.4" fill="none" stroke="#ff6a00" stroke-width="1.5"/>
<ellipse cx="461.5" cy="593.1" rx="7.5" ry="7.5" fill="none" stroke="#ff6a00" stroke-width="1.5"/>
<ellipse cx="476.3" cy="593.7" rx="8.3" ry="8.3" fill="none" stroke="#ff6a00" stroke-width="1.5"/>
<path d="M464.5 583.08 L467.7 585.32 L470.9 583.08 M467.7 585.32 L467.7 588.2" stroke="#ff6a00" stroke-width="1.1" fill="none" />
<path d="M457.3 591.1800000000001 L460.5 593.4200000000001 L463.7 591.1800000000001 M460.5 593.4200000000001 L460.5 596.3000000000001" stroke="#ff6a00" stroke-width="1.1" fill="none" />
<path d="M475.3 590.7 L475.3 595.7 L480.3 595.7" stroke="#ff6a00" stroke-width="1.1" fill="none" />
<ellipse cx="519.1" cy="563" rx="17.1" ry="11.9" fill="none" stroke="#00ff00" stroke-width="2.4"/>
<path d="M507.13 564 Q513.115 556.455 519.1 563 T531.07 562" stroke="#00ff00" stroke-width="2.04" fill="none" />
<line x1="518.3" y1="575" x2="518.3" y2="594.3" stroke="#ff6a00" stroke-width="1.6"/>
<path d="M514.0 594.3 L520.6999999999999 594.3 M514.3 594.3 L518.3 605.0 M514.9 605.5 L520.6999999999999 605.5" stroke="#ff6a00" stroke-width="1.5" fill="none" />
<line x1="518.3" y1="605.5" x2="518.3" y2="616.6" stroke="#ff6a00" stroke-width="1.5"/>
<path d="M518.3 616.6 C512.3 616.6 512.3 622.8000000000001 518.3 622.8000000000001 C512.3 622.8000000000001 512.3 629.0000000000001 518.3 629.0000000000001 C512.3 629.0 512.3 635.2 518.3 635.2" stroke="#ff6a00" stroke-width="1.2" fill="none" />
<line x1="518.3" y1="635.2" x2="518.3" y2="640.2" stroke="#a8a8a8" stroke-width="1"/>
<line x1="518.3" y1="637.2" x2="518.3" y2="640.2" stroke="#a8a8a8" stroke-width="0.9"/>
<line x1="513.8" y1="640.2" x2="522.8" y2="640.2" stroke="#a8a8a8" stroke-width="1"/>
<line x1="515.3" y1="642.6" x2="521.3" y2="642.6" stroke="#a8a8a8" stroke-width="0.9"/>
<line x1="516.8" y1="644.8000000000001" x2="519.8" y2="644.8000000000001" stroke="#a8a8a8" stroke-width="0.9"/>
<path d="M547.5 554 C541.5 554.0 541.5 561.0 547.5 561.0 C541.5 561.0 541.5 568.0 547.5 568.0 C541.5 568.0 541.5 575.0 547.5 575.0" stroke="#ff6a00" stroke-width="1.2" fill="none" />
<line x1="547.5" y1="575" x2="547.5" y2="599.2" stroke="#ff6a00" stroke-width="1.6"/>
<line x1="547.5" y1="599.2" x2="589.7" y2="599.2" stroke="#ff6a00" stroke-width="1.6"/>
<line x1="589.7" y1="533.9" x2="589.7" y2="547.2" stroke="#ff6a00" stroke-width="1.6"/>
<ellipse cx="589.7" cy="552.1" rx="8.9" ry="5.2" fill="none" stroke="#ff6a00" stroke-width="1.5"/>
<ellipse cx="589.7" cy="562.6" rx="8.9" ry="6" fill="none" stroke="#ff6a00" stroke-width="1.5"/>
<path d="M584.3 549 L589.7 552.6 L595.1 549 M589.7 552.6 L589.7 556.5 M584.5 563.6 L589.7 558.2 L594.9 563.6 Z" stroke="#ff6a00" stroke-width="1.2" fill="none" />
<line x1="589.7" y1="568.6" x2="589.7" y2="577.7" stroke="#ff6a00" stroke-width="1.6"/>
<rect x="585.1" y="577.7" width="9.199999999999932" height="12.699999999999932" fill="#ff6a00"/>
<line x1="589.7" y1="590.4" x2="589.7" y2="599.2" stroke="#ff6a00" stroke-width="1.6"/>
<text x="494.3" y="506.5" class="lbl" style="font-size:9px;letter-spacing:0.6px" fill="#ffffff">Q1</text>
<text x="459.5" y="613.7" class="lbl" style="font-size:8px;letter-spacing:0.3px" fill="#ffffff">VT1</text>
<text x="489.8" y="602.8" class="lbl" style="font-size:9px;letter-spacing:0.6px" fill="#ffffff">NGT</text>
<text x="496.8" y="657.6" class="lbl" style="font-size:13px;letter-spacing:0.35px" fill="#00ff00">UNIT 1</text>
<text x="497.5" y="676" class="lbl" style="font-size:13px;letter-spacing:0px" fill="#00ff00">Stop</text>
<line x1="658.5" y1="472" x2="658.5" y2="531" stroke="#ff6a00" stroke-width="1.6"/>
<line x1="658.5" y1="478" x2="658.5" y2="519" stroke="#00ff00" stroke-width="1.6"/>
<path d="M650.0 484.3 L658.5 479.3 L667.0 484.3" stroke="#00ff00" stroke-width="2.2" fill="none" stroke-linecap="round"/>
<path d="M650.0 488.3 L658.5 483.3 L667.0 488.3" stroke="#00ff00" stroke-width="2.2" fill="none" stroke-linecap="round"/>
<rect x="654.2" y="492" width="9.399999999999977" height="13.600000000000023" fill="#ff0000"/>
<path d="M650.0 508.1 L658.5 513.8000000000001 L667.0 508.1" stroke="#00ff00" stroke-width="2.2" fill="none" stroke-linecap="round"/>
<path d="M650.0 512.4 L658.5 518.1 L667.0 512.4" stroke="#00ff00" stroke-width="2.2" fill="none" stroke-linecap="round"/>
<ellipse cx="658.5" cy="537.3" rx="8.9" ry="6.4" fill="none" stroke="#ff6a00" stroke-width="1.6"/>
<path d="M654.0 540.7 L658.5 534.4 L663.0 540.7 Z" stroke="#ff6a00" stroke-width="1.3" fill="none" />
<ellipse cx="658.5" cy="548.3" rx="8.9" ry="6.4" fill="none" stroke="#3a66e8" stroke-width="1.6"/>
<path d="M654.0 545.3 L658.5 548.45 L663.0 545.3 M658.5 548.45 L658.5 552.5" stroke="#3a66e8" stroke-width="1.3" fill="none" />
<line x1="658.6" y1="554.7" x2="659.3" y2="604.3" stroke="#3a66e8" stroke-width="1.6"/>
<rect x="654.2" y="575" width="9.399999999999977" height="12.299999999999955" fill="#ff0000"/>
<rect x="605.5" y="604.3" width="91.79999999999995" height="2.5" fill="#3a66e8"/>
<rect x="714.6" y="604.3" width="98.10000000000002" height="2.5" fill="#3a66e8"/>
<ellipse cx="747.5" cy="542.9" rx="15.6" ry="12" fill="none" stroke="#ff0000" stroke-width="2"/>
<path d="M736.58 543.9 Q742.04 536.3 747.5 542.9 T758.42 541.9" stroke="#ff0000" stroke-width="1.7" fill="none" />
<line x1="747.8" y1="555" x2="749.2" y2="604.3" stroke="#3a66e8" stroke-width="1.6"/>
<rect x="744" y="575" width="9.399999999999977" height="12.299999999999955" fill="#00ff00"/>
<path d="M678.9 606 L680 656.5 L734.8 656.5 L733.3 606" stroke="#3a66e8" stroke-width="1.6" fill="none" />
<rect x="675" y="627.1" width="9.700000000000045" height="13.600000000000023" fill="#ff0000"/>
<text x="634.2" y="503" class="lbl" style="font-size:9px;letter-spacing:0.6px" fill="#ffffff">Q2</text>
<text x="713.4" y="509.9" class="lbl" style="font-size:13px;letter-spacing:0.5px" fill="#00ff00">Emergency</text>
<text x="709.7" y="520.5" class="lbl" style="font-size:13px;letter-spacing:0.5px" fill="#00ff00">Diesel Set</text>
<text x="599.4" y="599.9" class="lbl" style="font-size:9.5px;letter-spacing:1.15px" fill="#ffffff">0.4kV I</text>
<text x="760.3" y="599.9" class="lbl" style="font-size:9.5px;letter-spacing:1.15px" fill="#ffffff">0.4kV II</text>
<line x1="823.3" y1="472" x2="823.3" y2="548.6" stroke="#ff6a00" stroke-width="1.6"/>
<line x1="823.3" y1="480" x2="823.3" y2="520" stroke="#ff0000" stroke-width="1.6"/>
<path d="M814.8 487.2 L823.3 482.2 L831.8 487.2" stroke="#ff0000" stroke-width="2.2" fill="none" stroke-linecap="round"/>
<path d="M814.8 491.2 L823.3 486.2 L831.8 491.2" stroke="#ff0000" stroke-width="2.2" fill="none" stroke-linecap="round"/>
<rect x="819" y="494.1" width="9.700000000000045" height="13.5" fill="#00ff00"/>
<path d="M814.8 510.1 L823.3 515.8000000000001 L831.8 510.1" stroke="#ff0000" stroke-width="2.2" fill="none" stroke-linecap="round"/>
<path d="M814.8 514.4 L823.3 520.1 L831.8 514.4" stroke="#ff0000" stroke-width="2.2" fill="none" stroke-linecap="round"/>
<line x1="823.3" y1="548.6" x2="860" y2="548.6" stroke="#ff6a00" stroke-width="1.6"/>
<path d="M866.7 548.6 L852.4 543.8000000000001 L856.5 548.6 L852.4 553.4 Z" fill="#ff6a00"/>
<text x="799.5" y="504.4" class="lbl" style="font-size:9px;letter-spacing:0.6px" fill="#ffffff">Q7</text>
<text x="827.5" y="564.6" class="lbl" style="font-size:9px;letter-spacing:0.6px" fill="#ffffff">To Spare</text>
<line x1="865.7" y1="472" x2="865.7" y2="496" stroke="#ff6a00" stroke-width="1.3"/>
<rect x="861.9000000000001" y="496" width="7.6" height="13" rx="1.5" fill="none" stroke="#ff6a00" stroke-width="1.3"/>
<path d="M863.5 498.5 L867.9000000000001 498.5 L865.7 504 Z" stroke="#ff6a00" stroke-width="0.8" fill="#ff3f9f" />
<line x1="865.7" y1="517.2" x2="865.7" y2="520.2" stroke="#a8a8a8" stroke-width="0.9"/>
<line x1="861.2" y1="520.2" x2="870.2" y2="520.2" stroke="#a8a8a8" stroke-width="1"/>
<line x1="862.7" y1="522.6" x2="868.7" y2="522.6" stroke="#a8a8a8" stroke-width="0.9"/>
<line x1="864.2" y1="524.8000000000001" x2="867.2" y2="524.8000000000001" stroke="#a8a8a8" stroke-width="0.9"/>
<line x1="865.7" y1="509" x2="865.7" y2="517" stroke="#ff6a00" stroke-width="1.2"/>
<line x1="887" y1="472" x2="887" y2="514" stroke="#ff6a00" stroke-width="1.3"/>
<path d="M880.5 485.8 Q887 481.8 893.5 485.8" stroke="#ff6a00" stroke-width="2.6" fill="none" />
<rect x="882.7" y="495" width="8.6" height="16.600000000000023" fill="none" stroke="#ff6a00" stroke-width="1.1"/>
<ellipse cx="887" cy="522.3" rx="8.3" ry="8.3" fill="none" stroke="#ff6a00" stroke-width="1.5"/>
<ellipse cx="882.5" cy="531.6" rx="8.3" ry="8.3" fill="none" stroke="#ff6a00" stroke-width="1.5"/>
<ellipse cx="896.8" cy="532" rx="8.5" ry="8.5" fill="none" stroke="#ff6a00" stroke-width="1.5"/>
<path d="M883.8 520.38 L887 522.62 L890.2 520.38 M887 522.62 L887 525.5" stroke="#ff6a00" stroke-width="1.1" fill="none" />
<path d="M878.3 529.6800000000001 L881.5 531.9200000000001 L884.7 529.6800000000001 M881.5 531.9200000000001 L881.5 534.8000000000001" stroke="#ff6a00" stroke-width="1.1" fill="none" />
<path d="M895.8 529 L895.8 534 L900.8 534" stroke="#ff6a00" stroke-width="1.1" fill="none" />
<line x1="966.7" y1="472" x2="966.7" y2="496.3" stroke="#ff6a00" stroke-width="1.3"/>
<rect x="962.9000000000001" y="496.3" width="7.6" height="13.699999999999989" rx="1.5" fill="none" stroke="#ff6a00" stroke-width="1.3"/>
<path d="M964.5 498.8 L968.9000000000001 498.8 L966.7 504.3 Z" stroke="#ff6a00" stroke-width="0.8" fill="#ff3f9f" />
<line x1="966.7" y1="519" x2="966.7" y2="522" stroke="#a8a8a8" stroke-width="0.9"/>
<line x1="962.2" y1="522" x2="971.2" y2="522" stroke="#a8a8a8" stroke-width="1"/>
<line x1="963.7" y1="524.4" x2="969.7" y2="524.4" stroke="#a8a8a8" stroke-width="0.9"/>
<line x1="965.2" y1="526.6" x2="968.2" y2="526.6" stroke="#a8a8a8" stroke-width="0.9"/>
<line x1="966.7" y1="510" x2="966.7" y2="519" stroke="#ff6a00" stroke-width="1.2"/>
<line x1="1003" y1="472" x2="1003" y2="515" stroke="#ff6a00" stroke-width="1.3"/>
<path d="M996.5 486.1 Q1003 482.1 1009.5 486.1" stroke="#ff6a00" stroke-width="2.6" fill="none" />
<rect x="998.7" y="495.2" width="8.6" height="16.400000000000034" fill="none" stroke="#ff6a00" stroke-width="1.1"/>
<ellipse cx="1003" cy="523.3" rx="8.3" ry="8.3" fill="none" stroke="#ff6a00" stroke-width="1.5"/>
<ellipse cx="997.9" cy="531.5" rx="8.3" ry="8.3" fill="none" stroke="#ff6a00" stroke-width="1.5"/>
<ellipse cx="1012" cy="531.5" rx="8.5" ry="8.5" fill="none" stroke="#ff6a00" stroke-width="1.5"/>
<path d="M999.8 521.38 L1003 523.62 L1006.2 521.38 M1003 523.62 L1003 526.5" stroke="#ff6a00" stroke-width="1.1" fill="none" />
<path d="M993.6999999999999 529.58 L996.9 531.82 L1000.1 529.58 M996.9 531.82 L996.9 534.7" stroke="#ff6a00" stroke-width="1.1" fill="none" />
<path d="M1011 528.5 L1011 533.5 L1016 533.5" stroke="#ff6a00" stroke-width="1.1" fill="none" />
<text x="880.5" y="552" class="lbl" style="font-size:8px;letter-spacing:0.3px" fill="#ffffff">VT2</text>
<text x="996.2" y="552.2" class="lbl" style="font-size:8px;letter-spacing:0.3px" fill="#ffffff">VT4</text>
<line x1="1119.5" y1="472" x2="1119.5" y2="551" stroke="#ff6a00" stroke-width="1.6"/>
<line x1="1119.5" y1="481" x2="1119.5" y2="522" stroke="#00ff00" stroke-width="1.6"/>
<path d="M1111.0 486.9 L1119.5 481.9 L1128.0 486.9" stroke="#00ff00" stroke-width="2.2" fill="none" stroke-linecap="round"/>
<path d="M1111.0 490.9 L1119.5 485.9 L1128.0 490.9" stroke="#00ff00" stroke-width="2.2" fill="none" stroke-linecap="round"/>
<rect x="1116.3" y="495" width="7.900000000000091" height="13.5" fill="#00ff00"/>
<path d="M1111.0 510.0 L1119.5 515.7 L1128.0 510.0" stroke="#00ff00" stroke-width="2.2" fill="none" stroke-linecap="round"/>
<path d="M1111.0 514.3 L1119.5 520.0 L1128.0 514.3" stroke="#00ff00" stroke-width="2.2" fill="none" stroke-linecap="round"/>
<line x1="1031" y1="534.1" x2="1190.6" y2="534.1" stroke="#ff6a00" stroke-width="1.6"/>
<line x1="1031.5" y1="534.1" x2="1031.5" y2="558.5" stroke="#ff6a00" stroke-width="1.5"/>
<rect x="1027.7" y="558.5" width="7.6" height="11.799999999999955" rx="1.5" fill="none" stroke="#ff6a00" stroke-width="1.3"/>
<path d="M1029.3 561.0 L1033.7 561.0 L1031.5 566.5 Z" stroke="#ff6a00" stroke-width="0.8" fill="#ff3f9f" />
<line x1="1031.5" y1="577" x2="1031.5" y2="580" stroke="#a8a8a8" stroke-width="0.9"/>
<line x1="1027.0" y1="580" x2="1036.0" y2="580" stroke="#a8a8a8" stroke-width="1"/>
<line x1="1028.5" y1="582.4" x2="1034.5" y2="582.4" stroke="#a8a8a8" stroke-width="0.9"/>
<line x1="1030.0" y1="584.6" x2="1033.0" y2="584.6" stroke="#a8a8a8" stroke-width="0.9"/>
<line x1="1031.5" y1="570.3" x2="1031.5" y2="577" stroke="#ff6a00" stroke-width="1.3"/>
<line x1="1067.8" y1="534.1" x2="1067.8" y2="577" stroke="#ff6a00" stroke-width="1.3"/>
<path d="M1061.3 547.1 Q1067.8 543.1 1074.3 547.1" stroke="#ff6a00" stroke-width="2.6" fill="none" />
<rect x="1063.5" y="557.4" width="8.6" height="16.399999999999977" fill="none" stroke="#ff6a00" stroke-width="1.1"/>
<ellipse cx="1068" cy="584.4" rx="7.6" ry="7.6" fill="none" stroke="#ff6a00" stroke-width="1.5"/>
<ellipse cx="1062.4" cy="592.6" rx="7.8" ry="7.8" fill="none" stroke="#ff6a00" stroke-width="1.5"/>
<ellipse cx="1077.2" cy="592.6" rx="8.3" ry="8.3" fill="none" stroke="#ff6a00" stroke-width="1.5"/>
<path d="M1064.8 582.48 L1068 584.72 L1071.2 582.48 M1068 584.72 L1068 587.6" stroke="#ff6a00" stroke-width="1.1" fill="none" />
<path d="M1058.2 590.6800000000001 L1061.4 592.9200000000001 L1064.6000000000001 590.6800000000001 M1061.4 592.9200000000001 L1061.4 595.8000000000001" stroke="#ff6a00" stroke-width="1.1" fill="none" />
<path d="M1076.2 589.6 L1076.2 594.6 L1081.2 594.6" stroke="#ff6a00" stroke-width="1.1" fill="none" />
<ellipse cx="1120.6" cy="562.9" rx="16.7" ry="11.8" fill="none" stroke="#00ff00" stroke-width="2.4"/>
<path d="M1108.9099999999999 563.9 Q1114.7549999999999 556.41 1120.6 562.9 T1132.29 561.9" stroke="#00ff00" stroke-width="2.04" fill="none" />
<line x1="1119.5" y1="574" x2="1119.5" y2="594.5" stroke="#ff6a00" stroke-width="1.6"/>
<path d="M1115.2 594.5 L1121.9 594.5 M1115.5 594.5 L1119.5 604.3 M1116.1 604.8 L1121.9 604.8" stroke="#ff6a00" stroke-width="1.5" fill="none" />
<line x1="1119.5" y1="604.8" x2="1119.5" y2="614.8" stroke="#ff6a00" stroke-width="1.5"/>
<path d="M1119.5 614.8 C1113.5 614.8 1113.5 621.6 1119.5 621.6 C1113.5 621.6 1113.5 628.4000000000001 1119.5 628.4000000000001 C1113.5 628.4 1113.5 635.2 1119.5 635.2" stroke="#ff6a00" stroke-width="1.2" fill="none" />
<line x1="1119.5" y1="637.8" x2="1119.5" y2="640.8" stroke="#a8a8a8" stroke-width="0.9"/>
<line x1="1115.0" y1="640.8" x2="1124.0" y2="640.8" stroke="#a8a8a8" stroke-width="1"/>
<line x1="1116.5" y1="643.1999999999999" x2="1122.5" y2="643.1999999999999" stroke="#a8a8a8" stroke-width="0.9"/>
<line x1="1118.0" y1="645.4" x2="1121.0" y2="645.4" stroke="#a8a8a8" stroke-width="0.9"/>
<path d="M1149.5 554.4 C1143.5 554.4 1143.5 561.1666666666666 1149.5 561.1666666666666 C1143.5 561.1666666666666 1143.5 567.9333333333333 1149.5 567.9333333333333 C1143.5 567.9333333333334 1143.5 574.7 1149.5 574.7" stroke="#ff6a00" stroke-width="1.2" fill="none" />
<line x1="1149.5" y1="574.7" x2="1149.5" y2="599.2" stroke="#ff6a00" stroke-width="1.6"/>
<line x1="1149.5" y1="599.2" x2="1190.6" y2="599.2" stroke="#ff6a00" stroke-width="1.6"/>
<line x1="1190.6" y1="534.1" x2="1190.6" y2="547" stroke="#ff6a00" stroke-width="1.6"/>
<ellipse cx="1191.2" cy="552.3" rx="8.6" ry="5.3" fill="none" stroke="#ff6a00" stroke-width="1.5"/>
<ellipse cx="1191.2" cy="562.7" rx="8.6" ry="6" fill="none" stroke="#ff6a00" stroke-width="1.5"/>
<path d="M1185.8 549.2 L1191.2 552.8 L1196.6 549.2 M1191.2 552.8 L1191.2 556.6 M1186 563.7 L1191.2 558.3 L1196.4 563.7 Z" stroke="#ff6a00" stroke-width="1.2" fill="none" />
<line x1="1190.6" y1="568.7" x2="1190.6" y2="577.3" stroke="#ff6a00" stroke-width="1.6"/>
<rect x="1186.2" y="577.2" width="9.5" height="13.0" fill="#ff6a00"/>
<line x1="1190.6" y1="590.2" x2="1190.6" y2="599.2" stroke="#ff6a00" stroke-width="1.6"/>
<text x="1095.5" y="507" class="lbl" style="font-size:9px;letter-spacing:0.6px" fill="#ffffff">Q4</text>
<text x="1060.8" y="613.7" class="lbl" style="font-size:8px;letter-spacing:0.3px" fill="#ffffff">VT3</text>
<text x="1096.8" y="662.3" class="lbl" style="font-size:13px;letter-spacing:0.35px" fill="#00ff00">UNIT 2</text>
<text x="1097.3" y="679" class="lbl" style="font-size:13px;letter-spacing:0px" fill="#00ff00">Stop</text>
</svg><div id="tb"></div><div id="tbblack"></div>
<div class="btn" style="left:2px;width:64px">
<svg class="abs" style="left:9.0px;top:4px" width="42" height="38" viewBox="0 0 42 38"><defs><radialGradient id="ig" cx="45%" cy="30%" r="70%"><stop offset="0" stop-color="#b8d0ff"/><stop offset="0.6" stop-color="#4a74d8"/><stop offset="1" stop-color="#2a4aa8"/></radialGradient></defs>
<ellipse cx="20" cy="18" rx="17.5" ry="15.5" fill="url(#ig)"/>
<circle cx="20" cy="8.5" r="2.2" fill="#fff"/><path d="M15 12.5 L22 12.5 L22 24 L24.5 24 L24.5 26.5 L15 26.5 L15 24 L17.5 24 L17.5 15 L15 15 Z" fill="#fff"/></svg>
<div class="bl">Index</div></div>
<div class="btn" style="left:68px;width:64px">
<svg class="abs" style="left:9.0px;top:4px" width="42" height="38" viewBox="0 0 42 38"><ellipse cx="17" cy="14" rx="14" ry="11.5" fill="#4a8ee0" stroke="#2050a8" stroke-width="1"/>
<path d="M8 22 L6 30 L15 24 Z" fill="#4a8ee0"/><path d="M16 5 L18 5 L17.5 17 L16.5 17 Z" fill="#103080"/>
<circle cx="27" cy="25" r="8.5" fill="#f8b820" stroke="#d08000" stroke-width="0.8"/>
<path d="M22.5 25.5 Q27 30.5 31.5 25.5" stroke="#804000" stroke-width="1.2" fill="none"/><circle cx="24.5" cy="22.5" r="1" fill="#804000"/><circle cx="29.5" cy="22.5" r="1" fill="#804000"/></svg>
<div class="bl">Pr-Monitor</div></div>
<div class="btn" style="left:134px;width:64px">
<div class="abs" style="left:9.5px;top:2px;width:41px;height:36px;background:linear-gradient(170deg,#a8c4ea 0%,#6f97cf 35%,#4f7ab8 100%);color:#ffff00;font-family:'Liberation Serif',serif;font-weight:bold;font-size:25px;line-height:33px;text-align:center;letter-spacing:-1px">1</div>
<div class="bl">Unit1</div></div>
<div class="btn" style="left:200px;width:64px">
<div class="abs" style="left:9.5px;top:2px;width:41px;height:36px;background:linear-gradient(170deg,#a8c4ea 0%,#6f97cf 35%,#4f7ab8 100%);color:#ffff00;font-family:'Liberation Serif',serif;font-weight:bold;font-size:25px;line-height:33px;text-align:center;letter-spacing:-1px">2</div>
<div class="bl">Unit2</div></div>
<div class="btn" style="left:266px;width:65px">
<div class="abs" style="left:10.0px;top:2px;width:41px;height:36px;background:linear-gradient(170deg,#a8c4ea 0%,#6f97cf 35%,#4f7ab8 100%);color:#ffff00;font-family:'Liberation Serif',serif;font-weight:bold;font-size:22px;line-height:33px;text-align:center;letter-spacing:-1px">1&amp;2</div>
<div class="bl">Units</div></div>
<div class="btn" style="left:332px;width:64px">
<svg class="abs" style="left:9.0px;top:4px" width="42" height="38" viewBox="0 0 42 38"><path d="M8 3 L28 3 L35 10 L35 34 L8 34 Z" fill="#f4f4f4" stroke="#999" stroke-width="1"/>
<path d="M10 14 H33 M10 19 H33 M10 24 H33 M10 29 H33 M16 10 V34 M23 10 V34" stroke="#bbb" stroke-width="0.8"/>
<rect x="25" y="22" width="3" height="9" fill="#2a70d0"/><rect x="29.5" y="22" width="3" height="9" fill="#2a70d0"/>
<path d="M2 6 L10 14 M4 14 L12 8 M2 10 L14 10" stroke="#30c030" stroke-width="3"/></svg>
<div class="bl">Reports</div></div>
<div class="btn" style="left:397.5px;width:63px">
<svg class="abs" style="left:8.5px;top:4px" width="42" height="38" viewBox="0 0 42 38"><defs><linearGradient id="fg" x1="0" y1="0" x2="0" y2="1"><stop offset="0" stop-color="#8ab0ff"/><stop offset="1" stop-color="#2248c8"/></linearGradient></defs>
<rect x="4" y="6" width="34" height="27" rx="2" fill="url(#fg)" stroke="#1a3a9a" stroke-width="1"/>
<path d="M22 2 Q16 12 18 22 L23 22 Q21 30 26 36" stroke="#111" stroke-width="1.6" fill="none"/>
<path d="M12 12 V16 M28 12 V16" stroke="#111" stroke-width="1.6"/><path d="M10 24 Q20 30 32 24" stroke="#111" stroke-width="1.4" fill="none"/></svg>
<div class="bl">Oper-Log</div></div>
<div class="btn" style="left:463px;width:63px">
<svg class="abs" style="left:8.5px;top:4px" width="42" height="38" viewBox="0 0 42 38"><defs><radialGradient id="sg" cx="60%" cy="50%" r="60%"><stop offset="0" stop-color="#222"/><stop offset="0.7" stop-color="#555"/><stop offset="1" stop-color="#bbb"/></radialGradient></defs>
<ellipse cx="26" cy="18" rx="11" ry="16" transform="rotate(-25 26 18)" fill="url(#sg)" stroke="#888" stroke-width="1"/>
<path d="M8 16 L16 12 L22 30 L12 30 Z" fill="#ccc" stroke="#777" stroke-width="1"/></svg>
<div class="bl">His-Event</div></div>
<div class="btn" style="left:528.5px;width:64px">
<svg class="abs" style="left:9.0px;top:4px" width="42" height="38" viewBox="0 0 42 38"><rect x="3" y="4" width="36" height="28" rx="2" fill="#e8e8e8" stroke="#888" stroke-width="1"/>
<rect x="6" y="7" width="30" height="21" fill="#2a3238"/>
<path d="M8 20 L17 20 L19 13 L21 24 L23 18 L34 18" stroke="#30c090" stroke-width="1" fill="none"/></svg>
<div class="bl">His-Curve</div></div>
<div class="btn" style="left:594px;width:70px">
<svg class="abs" style="left:12.0px;top:4px" width="42" height="38" viewBox="0 0 42 38"><rect x="2" y="3" width="38" height="26" rx="2" fill="#dbeefa" stroke="#2a7ad8" stroke-width="2.5"/>
<path d="M14 12 L30 10 L32 14 L18 16 Z" fill="#bbb"/><rect x="18" y="14" width="5" height="22" rx="1" fill="#2a70d8"/>
<rect x="29" y="18" width="5" height="15" rx="1" fill="#e84a10"/><path d="M26 11 L36 9 L38 15 L28 16 Z" fill="#ccc"/></svg>
<div class="bl">Net-Status</div></div>
<div class="abs" style="left:0;top:703px;width:68px;height:64px;border:2px solid #ff0000"></div>
</body></html>
